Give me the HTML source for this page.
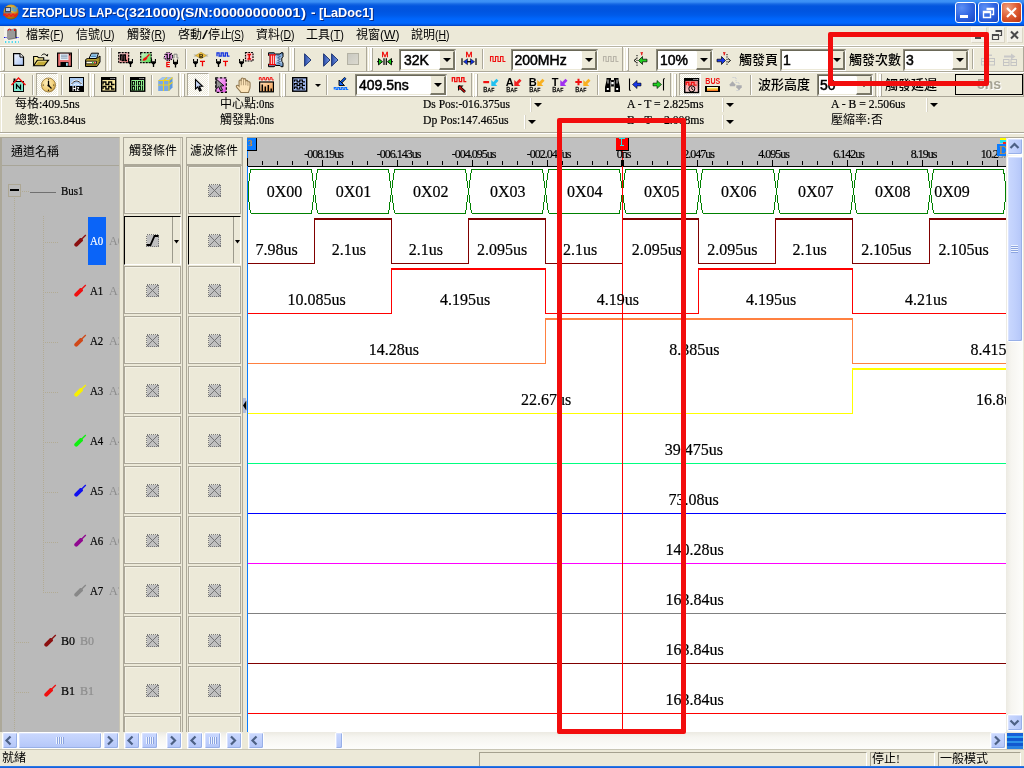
<!DOCTYPE html>
<html><head><meta charset="utf-8"><title>ZEROPLUS LAP-C</title><style>
html,body{margin:0;padding:0;background:#ECE9D8;}
body{width:1024px;height:768px;overflow:hidden;position:relative;font-family:"Liberation Sans",sans-serif;}
.b{position:absolute;display:block;box-sizing:border-box}
.t{position:absolute;white-space:nowrap;}
#w{position:absolute;left:0;top:0;width:1024px;height:768px;will-change:transform;overflow:hidden}
.c{display:inline-block;vertical-align:top;overflow:visible}
.cj{font-family:"Liberation Sans","Noto Sans CJK TC",sans-serif;color:#000}
.cjm{font-family:"Liberation Sans","Noto Sans CJK TC",sans-serif;color:#000;font-weight:500}
u{text-decoration:underline;text-underline-offset:1px}
</style></head><body>
<div id="w">
<!-- titlebar -->
<div class="b" style="left:0px;top:0px;width:1024px;height:26px;background:linear-gradient(to bottom,#3F93F6 0px,#3A8EF4 2px,#1668E4 4px,#0356DE 6px,#0054E0 11px,#005AE8 15px,#0066FC 19px,#0068FF 23px,#0058E4 24.500px,#003EC0 26px);"></div><svg class="b" style="left:3px;top:4px" width="16" height="16" viewBox="0 0 16 16">
<defs><radialGradient id="gl" cx="0.45" cy="0.35" r="0.7"><stop offset="0" stop-color="#F6D860"/><stop offset="0.6" stop-color="#C89018"/><stop offset="1" stop-color="#6A4808"/></radialGradient></defs>
<circle cx="8" cy="8" r="7.6" fill="url(#gl)"/>
<rect x="2" y="3" width="6" height="5" fill="#404858"/><rect x="3" y="4" width="4" height="3" fill="#B8C8F0"/>
<rect x="1.5" y="8" width="7" height="1.6" fill="#707888"/>
<path d="M9 7V4h2v3h2V4h2" stroke="#40A0F0" stroke-width="1.2" fill="none"/>
<path d="M1 12V10.2h2V12h2V10.2h2V12h2V10.2h2V12h2V10.2h2" stroke="#F01818" stroke-width="1.3" fill="none"/>
</svg><div class="t" style="left:22px;top:5px;font:bold 13px/15px 'Liberation Sans';color:#fff;text-shadow:1px 1px 0 #0A2A80"><span style="display:inline-block;transform-origin:0 0;transform:scaleX(0.8992);">ZEROPLUS LAP-C(</span></div><div class="t" style="left:128.5px;top:5px;font:bold 13px/15px 'Liberation Sans';color:#fff;text-shadow:1px 1px 0 #0A2A80"><span style="display:inline-block;transform-origin:0 0;transform:scaleX(1.0950);">321000</span></div><div class="t" style="left:176px;top:5px;font:bold 13px/15px 'Liberation Sans';color:#fff;text-shadow:1px 1px 0 #0A2A80"><span style="display:inline-block;transform-origin:0 0;transform:scaleX(1.0395);">)(</span></div><div class="t" style="left:185px;top:5px;font:bold 13px/15px 'Liberation Sans';color:#fff;text-shadow:1px 1px 0 #0A2A80"><span style="display:inline-block;transform-origin:0 0;transform:scaleX(1.0769);">S/N:</span></div><div class="t" style="left:213px;top:5px;font:bold 13px/15px 'Liberation Sans';color:#fff;text-shadow:1px 1px 0 #0A2A80"><span style="display:inline-block;transform-origin:0 0;transform:scaleX(1.1002);">00000000001</span></div><div class="t" style="left:300.5px;top:5px;font:bold 13px/15px 'Liberation Sans';color:#fff;text-shadow:1px 1px 0 #0A2A80"><span style="display:inline-block;transform-origin:0 0;transform:scaleX(1.1550);">)</span></div><div class="t" style="left:310.5px;top:5px;font:bold 13px/15px 'Liberation Sans';color:#fff;text-shadow:1px 1px 0 #0A2A80"><span style="display:inline-block;transform-origin:0 0;transform:scaleX(1.0395);">-</span></div><div class="t" style="left:318.5px;top:5px;font:bold 13px/15px 'Liberation Sans';color:#fff;text-shadow:1px 1px 0 #0A2A80"><span style="display:inline-block;transform-origin:0 0;transform:scaleX(0.9799);">[LaDoc1]</span></div><div class="b" style="left:955px;top:2px;width:21px;height:21px;border:1px solid #fff;border-radius:3px;background:radial-gradient(circle at 30% 25%,#5C8FF5 0%,#2C62E0 55%,#1A46C0 100%);box-sizing:border-box"><div class="b" style="left:4px;top:12px;width:8px;height:3px;background:#fff"></div></div><div class="b" style="left:978px;top:2px;width:21px;height:21px;border:1px solid #fff;border-radius:3px;background:radial-gradient(circle at 30% 25%,#5C8FF5 0%,#2C62E0 55%,#1A46C0 100%);box-sizing:border-box"><svg class="b" style="left:1px;top:1px" width="17" height="17"><path d="M6.5 4.5h7v6h-2M6.5 5.5h7" stroke="#fff" stroke-width="1.4" fill="none"/><path d="M3.5 7.5h7v6h-7zM3.5 8.5h7" stroke="#fff" stroke-width="1.4" fill="none"/></svg></div><div class="b" style="left:1001px;top:2px;width:21px;height:21px;border:1px solid #fff;border-radius:3px;background:radial-gradient(circle at 30% 25%,#F0A080 0%,#DE5A30 50%,#B83010 100%);box-sizing:border-box"><svg class="b" style="left:1px;top:1px" width="17" height="17"><path d="M4 4l9 9M13 4l-9 9" stroke="#fff" stroke-width="2.2"/></svg></div>
<!-- menubar -->
<div class="b" style="left:0px;top:26px;width:1024px;height:21px;background:#ECE9D8"></div><svg class="b" style="left:3px;top:27px" width="18" height="17" viewBox="0 0 18 17">
<rect x="1" y="0" width="16" height="16" fill="#F4F2EA"/>
<path d="M4 3l8-1.5 1.500 1v9l-8 1.500L4 11z" fill="#808080"/><path d="M4 3l8-1.500v9L4 12z" fill="#9A9A9A"/>
<path d="M12 1.500l1.500 1v9L12 10.500z" fill="#505050"/>
<path d="M5 3.500c1-2 2-2 3 0" stroke="#E01010" stroke-width="1.200" fill="none"/><rect x="11" y="2" width="1.500" height="2" fill="#E01010"/>
<path d="M1 10.500h3M13 10.500h3" stroke="#1010E0" stroke-width="1.200" stroke-dasharray="1.500 1"/>
<path d="M2 15h14" stroke="#10D0F0" stroke-width="1.300" stroke-dasharray="1.300 2"/>
</svg><div class="t" style="left:26px;top:29px;font:12px/12px 'Liberation Sans';color:#000;"><span class="c cj" style="width:24px">檔案</span></div><div class="t" style="left:50px;top:29px;font:12px/12px 'Liberation Sans';color:#000;"><span style="display:inline-block;transform-origin:0 0;transform:scaleX(0.8811);">(<u>F</u>)</span></div><div class="t" style="left:76px;top:29px;font:12px/12px 'Liberation Sans';color:#000;"><span class="c cj" style="width:24px">信號</span></div><div class="t" style="left:100px;top:29px;font:12px/12px 'Liberation Sans';color:#000;"><span style="display:inline-block;transform-origin:0 0;transform:scaleX(0.8704);">(<u>U</u>)</span></div><div class="t" style="left:127px;top:29px;font:12px/12px 'Liberation Sans';color:#000;"><span class="c cj" style="width:24px">觸發</span></div><div class="t" style="left:151px;top:29px;font:12px/12px 'Liberation Sans';color:#000;"><span style="display:inline-block;transform-origin:0 0;transform:scaleX(0.8704);">(<u>R</u>)</span></div><div class="t" style="left:256px;top:29px;font:12px/12px 'Liberation Sans';color:#000;"><span class="c cj" style="width:24px">資料</span></div><div class="t" style="left:280px;top:29px;font:12px/12px 'Liberation Sans';color:#000;"><span style="display:inline-block;transform-origin:0 0;transform:scaleX(0.8704);">(<u>D</u>)</span></div><div class="t" style="left:306px;top:29px;font:12px/12px 'Liberation Sans';color:#000;"><span class="c cj" style="width:24px">工具</span></div><div class="t" style="left:330px;top:29px;font:12px/12px 'Liberation Sans';color:#000;"><span style="display:inline-block;transform-origin:0 0;transform:scaleX(0.9137);">(<u>T</u>)</span></div><div class="t" style="left:356px;top:29px;font:12px/12px 'Liberation Sans';color:#000;"><span class="c cj" style="width:24px">視窗</span></div><div class="t" style="left:380px;top:29px;font:12px/12px 'Liberation Sans';color:#000;"><span style="display:inline-block;transform-origin:0 0;transform:scaleX(1.0094);">(<u>W</u>)</span></div><div class="t" style="left:411px;top:29px;font:12px/12px 'Liberation Sans';color:#000;"><span class="c cj" style="width:24px">說明</span></div><div class="t" style="left:435px;top:29px;font:12px/12px 'Liberation Sans';color:#000;"><span style="display:inline-block;transform-origin:0 0;transform:scaleX(0.8704);">(<u>H</u>)</span></div><div class="t" style="left:178px;top:29px;font:12px/12px 'Liberation Sans';color:#000;"><span class="c cj" style="width:24px">啓動</span></div><div class="t" style="left:202px;top:29px;font:12px/12px 'Liberation Sans';color:#000;"><span style="display:inline-block;transform-origin:0 0;transform:scaleX(1.7996);">/</span></div><div class="t" style="left:208px;top:29px;font:12px/12px 'Liberation Sans';color:#000;"><span class="c cj" style="width:24px">停止</span></div><div class="t" style="left:231px;top:29px;font:12px/12px 'Liberation Sans';color:#000;"><span style="display:inline-block;transform-origin:0 0;transform:scaleX(0.8127);">(<u>S</u>)</span></div><div class="b" style="left:971px;top:27px;width:16px;height:16px;background:#F3F1E8;border:1px solid #F8F7F2;border-right-color:#DAD6C6;border-bottom-color:#DAD6C6;box-sizing:border-box"><div class="b" style="left:3px;top:9px;width:6px;height:2px;background:#4A4A4A"></div></div><div class="b" style="left:989px;top:27px;width:16px;height:16px;background:#F3F1E8;border:1px solid #F8F7F2;border-right-color:#DAD6C6;border-bottom-color:#DAD6C6;box-sizing:border-box"><svg class="b" style="left:0;top:0" width="14" height="14"><path d="M5.5 2.5h6v5h-2M5.5 3.5h6" stroke="#4A4A4A" stroke-width="1.2" fill="none"/><path d="M2.5 6.5h6v5h-6zM2.5 7.5h6" stroke="#4A4A4A" stroke-width="1.2" fill="none"/></svg></div><div class="b" style="left:1007px;top:27px;width:16px;height:16px;background:#F3F1E8;border:1px solid #F8F7F2;border-right-color:#DAD6C6;border-bottom-color:#DAD6C6;box-sizing:border-box"><svg class="b" style="left:0;top:0" width="14" height="14"><path d="M3 3.5l7 7M10 3.5l-7 7" stroke="#4A4A4A" stroke-width="2"/></svg></div><div class="b" style="left:0px;top:45px;width:1024px;height:1px;background:#fff"></div><div class="b" style="left:0px;top:46px;width:1024px;height:1px;background:#B8B5A4"></div><div class="b" style="left:0px;top:47px;width:1024px;height:1px;background:#fff"></div>
<!-- toolbars -->
<div class="b" style="left:0px;top:71px;width:1024px;height:1px;background:#ACA899"></div><div class="b" style="left:0px;top:72px;width:1024px;height:1px;background:#FFFFFF"></div><div class="b" style="left:0px;top:96px;width:1024px;height:1px;background:#ACA899"></div><div class="b" style="left:0px;top:47px;width:1px;height:24px;background:#FFFFFF"></div><div class="b" style="left:105px;top:47px;width:1px;height:24px;background:#ACA899"></div><div class="b" style="left:2px;top:48px;width:3px;height:23px;border-left:2px solid #FFFFFF;border-right:1px solid #ACA899;border-bottom:1px solid #ACA899"></div><div class="b" style="left:107px;top:47px;width:1px;height:24px;background:#FFFFFF"></div><div class="b" style="left:288px;top:47px;width:1px;height:24px;background:#ACA899"></div><div class="b" style="left:109px;top:48px;width:3px;height:23px;border-left:2px solid #FFFFFF;border-right:1px solid #ACA899;border-bottom:1px solid #ACA899"></div><div class="b" style="left:290px;top:47px;width:1px;height:24px;background:#FFFFFF"></div><div class="b" style="left:366px;top:47px;width:1px;height:24px;background:#ACA899"></div><div class="b" style="left:292px;top:48px;width:3px;height:23px;border-left:2px solid #FFFFFF;border-right:1px solid #ACA899;border-bottom:1px solid #ACA899"></div><div class="b" style="left:368px;top:47px;width:1px;height:24px;background:#FFFFFF"></div><div class="b" style="left:622px;top:47px;width:1px;height:24px;background:#ACA899"></div><div class="b" style="left:370px;top:48px;width:3px;height:23px;border-left:2px solid #FFFFFF;border-right:1px solid #ACA899;border-bottom:1px solid #ACA899"></div><div class="b" style="left:624px;top:47px;width:1px;height:24px;background:#FFFFFF"></div><div class="b" style="left:1023px;top:47px;width:1px;height:24px;background:#ACA899"></div><div class="b" style="left:626px;top:48px;width:3px;height:23px;border-left:2px solid #FFFFFF;border-right:1px solid #ACA899;border-bottom:1px solid #ACA899"></div><div class="b" style="left:0px;top:73px;width:1px;height:24px;background:#FFFFFF"></div><div class="b" style="left:88px;top:73px;width:1px;height:24px;background:#ACA899"></div><div class="b" style="left:2px;top:74px;width:3px;height:23px;border-left:2px solid #FFFFFF;border-right:1px solid #ACA899;border-bottom:1px solid #ACA899"></div><div class="b" style="left:90px;top:73px;width:1px;height:24px;background:#FFFFFF"></div><div class="b" style="left:178px;top:73px;width:1px;height:24px;background:#ACA899"></div><div class="b" style="left:92px;top:74px;width:3px;height:23px;border-left:2px solid #FFFFFF;border-right:1px solid #ACA899;border-bottom:1px solid #ACA899"></div><div class="b" style="left:180px;top:73px;width:1px;height:24px;background:#FFFFFF"></div><div class="b" style="left:279px;top:73px;width:1px;height:24px;background:#ACA899"></div><div class="b" style="left:182px;top:74px;width:3px;height:23px;border-left:2px solid #FFFFFF;border-right:1px solid #ACA899;border-bottom:1px solid #ACA899"></div><div class="b" style="left:281px;top:73px;width:1px;height:24px;background:#FFFFFF"></div><div class="b" style="left:471px;top:73px;width:1px;height:24px;background:#ACA899"></div><div class="b" style="left:283px;top:74px;width:3px;height:23px;border-left:2px solid #FFFFFF;border-right:1px solid #ACA899;border-bottom:1px solid #ACA899"></div><div class="b" style="left:473px;top:73px;width:1px;height:24px;background:#FFFFFF"></div><div class="b" style="left:670px;top:73px;width:1px;height:24px;background:#ACA899"></div><div class="b" style="left:475px;top:74px;width:3px;height:23px;border-left:2px solid #FFFFFF;border-right:1px solid #ACA899;border-bottom:1px solid #ACA899"></div><div class="b" style="left:672px;top:73px;width:1px;height:24px;background:#FFFFFF"></div><div class="b" style="left:875px;top:73px;width:1px;height:24px;background:#ACA899"></div><div class="b" style="left:674px;top:74px;width:3px;height:23px;border-left:2px solid #FFFFFF;border-right:1px solid #ACA899;border-bottom:1px solid #ACA899"></div><div class="b" style="left:877px;top:73px;width:1px;height:24px;background:#FFFFFF"></div><div class="b" style="left:1023px;top:73px;width:1px;height:24px;background:#ACA899"></div><div class="b" style="left:879px;top:74px;width:3px;height:23px;border-left:2px solid #FFFFFF;border-right:1px solid #ACA899;border-bottom:1px solid #ACA899"></div><svg class="b" style="left:13px;top:53px;overflow:visible" width="16" height="16" viewBox="0 0 16 16"><defs><linearGradient id="ng" x1="0" y1="0" x2="1" y2="1"><stop offset="0" stop-color="#F4F7FE"/><stop offset="1" stop-color="#A8C4F4"/></linearGradient></defs><path d="M.6 .6h6.400l3.500 3.500v8.300h-9.900z" fill="url(#ng)" stroke="#000" stroke-width="1.200"/><path d="M7 .6v3.500h3.500" fill="#fff" stroke="#000" stroke-width="1"/></svg><svg class="b" style="left:33px;top:53px;overflow:visible" width="16" height="16" viewBox="0 0 16 16"><path d="M8.500 2.500c1.500-2 3.800-2 5 0" stroke="#000" fill="none" stroke-width="1"/><path d="M12.500 2.600l2.300.8.400-2.600z" fill="#000"/><path d="M.6 12.500V3.500h3.800l1.300 1.300h5v2.500" fill="#FAEC98" stroke="#000" stroke-width="1.100"/><path d="M.6 12.700l3.700-5.400h11.200l-4.200 5.400z" fill="#C4AC38" stroke="#000" stroke-width="1.100"/><path d="M2.800 11.500l2.400-3.200h8" stroke="#E8D880" fill="none"/></svg><svg class="b" style="left:57px;top:53px;overflow:visible" width="16" height="16" viewBox="0 0 16 16"><rect x=".6" y=".1" width="13.800" height="13.300" fill="#E87070" stroke="#000" stroke-width="1.200"/><rect x="3" y=".7" width="8.500" height="6.300" fill="#E6EEF6"/><path d="M4 2.200h6.500M4 3.700h6.500M4 5.200h6.500" stroke="#8FA4BC"/><rect x="3.500" y="9" width="8" height="4.400" fill="#000"/><rect x="9" y="9.800" width="1.800" height="3" fill="#9FE0F0"/><rect x="12" y="1" width="1.400" height="1.400" fill="#000"/></svg><svg class="b" style="left:85px;top:53px;overflow:visible" width="16" height="16" viewBox="0 0 16 16"><path d="M4 5.500l2.500-5.300h7L11.500 5.500z" fill="#BFE3F7" stroke="#000"/><path d="M6.500 2h5M6 3.500h5" stroke="#5090C0"/><path d="M.5 8c0-2 1-2.500 3-2.500h8l3.500-2.500v6l-3 4.500h-11.500z" fill="#B8A030" stroke="#000"/><path d="M1 8.200h10.500v2.600h-10.500z" fill="#FFFBE0" stroke="#000" stroke-width=".8"/><path d="M1 12h10.500" stroke="#6A5A10" /><rect x="7" y="9" width="1.500" height="1.200" fill="#20C020"/><rect x="9" y="9" width="1.500" height="1.200" fill="#F02020"/><path d="M12.500 6.500l2-1.500M12.500 8.500l2-1.500M12.500 10.500l2-2" stroke="#7A6A18" stroke-width=".8"/></svg><svg class="b" style="left:304px;top:53px;overflow:visible" width="16" height="16" viewBox="0 0 16 16"><defs><linearGradient id="pg" x1="0" x2="1"><stop offset="0" stop-color="#2A4CA8"/><stop offset="1" stop-color="#7C9EE8"/></linearGradient></defs><path d="M.6 .8L7 7 .6 13.200z" fill="url(#pg)" stroke="#102868" stroke-width=".9"/></svg><svg class="b" style="left:323px;top:53px;overflow:visible" width="16" height="16" viewBox="0 0 16 16"><path d="M.6 .8L7 7 .6 13.200z" fill="url(#pg)" stroke="#102868" stroke-width=".9"/><path d="M8.600 .8L15 7 8.600 13.200z" fill="url(#pg)" stroke="#102868" stroke-width=".9"/></svg><svg class="b" style="left:347px;top:53px;overflow:visible" width="16" height="16" viewBox="0 0 16 16"><defs><linearGradient id="sg" x1="0" y1="0" x2="1" y2="1"><stop offset="0" stop-color="#C8C8C0"/><stop offset="1" stop-color="#DCDAD0"/></linearGradient></defs><rect x=".5" y=".5" width="11" height="11" fill="url(#sg)" stroke="#B4B2A4"/></svg><svg class="b" style="left:118px;top:52px;overflow:visible" width="16" height="16" viewBox="0 0 16 16"><defs><linearGradient id="t1g" x1="0" y1="0" x2="1" y2="1"><stop offset="0" stop-color="#FCE4E4"/><stop offset="1" stop-color="#F07878"/></linearGradient></defs><rect x=".7" y=".7" width="10" height="10" fill="url(#t1g)" stroke="#000" stroke-width="1.200" stroke-dasharray="2 1"/><path d="M2.5 8.500V3H4.125V8.500H5.750V3H7.375V8.500H9" stroke="#000" stroke-width="1.300" fill="none"/><path d="M10.550 7v2.500M14.450 7v2.500" stroke="#000" stroke-width="1.100"/><path d="M10 9.200h5v1.600l-1.500 1.500h-2l-1.500-1.500z" fill="#000"/><path d="M12.500 11.800v3.200" stroke="#000" stroke-width="1.300"/></svg><svg class="b" style="left:140px;top:52px;overflow:visible" width="16" height="16" viewBox="0 0 16 16"><defs><linearGradient id="t2g" x1="0" y1="0" x2="1" y2="1"><stop offset="0" stop-color="#D8F8D0"/><stop offset="1" stop-color="#48D848"/></linearGradient></defs><rect x=".7" y=".7" width="10.500" height="10" fill="url(#t2g)" stroke="#000" stroke-width="1.200" stroke-dasharray="2 1"/><path d="M2.500 8.500c.3-1.800 1.800-3 3.800-3.800L7.500 6c-.8 2-2.500 3.200-5 2.500z" fill="#F01010"/><path d="M6.500 5.500L9.500 2.300" stroke="#F01010" stroke-width="1.300"/><path d="M11.550 7v2.500M15.450 7v2.500" stroke="#000" stroke-width="1.100"/><path d="M11 9.200h5v1.600l-1.500 1.500h-2l-1.500-1.500z" fill="#000"/><path d="M13.500 11.800v3.200" stroke="#000" stroke-width="1.300"/></svg><svg class="b" style="left:163px;top:52px;overflow:visible" width="16" height="16" viewBox="0 0 16 16"><path d="M0 6h2M9 6h2V2.200h3V6h1.500" stroke="#808080" stroke-width="1" fill="none"/><circle cx="5.500" cy="4.500" r="4" fill="#F0A0F0" stroke="#000" stroke-width="1.100" stroke-dasharray="1.300 1"/><path d="M3 2.500h1.200v4.300h2.600V2.500h1.200" stroke="#000" stroke-width="1.200" fill="none"/><path d="M3.300 10.300h3.700M3.300 12.500h3.200M3.300 14.700h3.700M3.800 10.300v4.400" stroke="#F00000" stroke-width="1.200" fill="none"/><path d="M10.550 7.500v2.500M14.450 7.500v2.500" stroke="#000" stroke-width="1.100"/><path d="M10 9.700h5v1.600l-1.500 1.500h-2l-1.500-1.500z" fill="#000"/><path d="M12.500 12.300v3.200" stroke="#000" stroke-width="1.300"/></svg><svg class="b" style="left:193px;top:52px;overflow:visible" width="16" height="16" viewBox="0 0 16 16"><path d="M1 5l2-3M1 2l2 3M13 5l2-3M13 2l2 3" stroke="#B8B8B0" stroke-width=".7"/><path d="M2.500 3.500L8 .3l5.500 3.200L8 6.700z" fill="#F0C040" stroke="#A08020" stroke-width=".5"/><text x="6" y="5.800" font-size="6" font-weight="bold" font-family="Liberation Sans" fill="#000">B</text><path d="M7 9.300h5M9.500 9.300v5" stroke="#F00000" stroke-width="1.300"/><path d="M0.550 7v2.500M4.450 7v2.500" stroke="#000" stroke-width="1.100"/><path d="M0 9.200h5v1.600l-1.500 1.500h-2l-1.500-1.500z" fill="#000"/><path d="M2.500 11.800v3.200" stroke="#000" stroke-width="1.300"/></svg><svg class="b" style="left:215px;top:52px;overflow:visible" width="16" height="16" viewBox="0 0 16 16"><path d="M2 4.200V0.800H4.08333V4.200H6.16667V0.800H8.250V4.200H10.3333V0.800H12.4167V4.200H14.500" stroke="#1030E0" stroke-width="1.300" fill="none"/><path d="M8 9.300h5M10.500 9.300v5" stroke="#F00000" stroke-width="1.300"/><path d="M1.550 7v2.500M5.450 7v2.500" stroke="#000" stroke-width="1.100"/><path d="M1 9.200h5v1.600l-1.500 1.500h-2l-1.500-1.500z" fill="#000"/><path d="M3.500 11.800v3.200" stroke="#000" stroke-width="1.300"/></svg><svg class="b" style="left:238px;top:52px;overflow:visible" width="16" height="16" viewBox="0 0 16 16"><rect x="7.500" y=".5" width="7.500" height="8.500" fill="#FAC8C8" stroke="#000" stroke-width="1.200" stroke-dasharray="1.800 1"/><path d="M9.500 2.500h3.500M9.500 7h3.500M11.250 2.500v4.500" stroke="#E00000" stroke-width="1.500"/><path d="M1.550 7v2.500M5.450 7v2.500" stroke="#000" stroke-width="1.100"/><path d="M1 9.200h5v1.600l-1.500 1.500h-2l-1.500-1.500z" fill="#000"/><path d="M3.500 11.800v3.200" stroke="#000" stroke-width="1.300"/></svg><svg class="b" style="left:268px;top:52px;overflow:visible" width="16" height="16" viewBox="0 0 16 16"><defs><linearGradient id="dvg" x1="0" y1="0" x2="0" y2="1"><stop offset="0" stop-color="#5888C0"/><stop offset=".5" stop-color="#D0E4F8"/><stop offset="1" stop-color="#5888C0"/></linearGradient></defs><path d="M.5 .8h5.500l1.500 1.200h4.500l1-1.200h2v4l-1.200 1.200v3.500l1.200 1.200v4h-2l-1-1.200H7.500L6 14.700H.5V12h1V3.500h-1z" fill="url(#dvg)" stroke="#000" stroke-width="1"/><rect x="1.500" y="3" width="6" height="9.500" fill="#fff"/><path d="M2.300 3v9.500M4.300 3v9.500M6.300 3v9.500" stroke="#F00000" stroke-width="1.100"/><path d="M.8 2.800h7.200M.8 12.700h7.200" stroke="#F00000" stroke-width="1.300"/><path d="M9.500 3.500l3 1.200-3 1.200 3 1.200-3 1.200 3 1.200-3 1.200 3 1.200" stroke="#284878" stroke-width=".7" fill="none"/></svg><svg class="b" style="left:377px;top:52px;overflow:visible" width="16" height="16" viewBox="0 0 16 16"><g transform="translate(4.500 0) scale(1.200 .9)"><text x="0" y="5.500" font-size="7" font-family="Liberation Sans" fill="#F00000" stroke="#F00000" stroke-width=".3">M</text></g><path d="M1.500 6.500l4 3.200-4 3.200z" fill="#10D010" stroke="#000" stroke-width=".9"/><path d="M14.500 6.500l-4 3.200 4 3.200z" fill="#10D010" stroke="#000" stroke-width=".9"/><path d="M0 9.700h2M14 9.700h2" stroke="#000"/><path d="M7 6.300v6.800M9.300 6.300v6.800" stroke="#000" stroke-width="1.200"/></svg><svg class="b" style="left:461px;top:52px;overflow:visible" width="16" height="16" viewBox="0 0 16 16"><g transform="translate(4.500 0) scale(1.200 .9)"><text x="0" y="5.500" font-size="7" font-family="Liberation Sans" fill="#F00000" stroke="#F00000" stroke-width=".3">M</text></g><path d="M1 6.300v6.800M15 6.300v6.800" stroke="#000" stroke-width="1.200"/><path d="M2.500 9.700l4-3v6z" fill="#1030E0" stroke="#000" stroke-width=".5"/><path d="M13.500 9.700l-4-3v6z" fill="#1030E0" stroke="#000" stroke-width=".5"/><path d="M6 9.700h4" stroke="#000" stroke-width="1.300"/></svg><svg class="b" style="left:490px;top:52px;overflow:visible" width="16" height="16" viewBox="0 0 16 16"><path d="M0.500 9.500V4.500H3V9.500H5.500V4.500H8V9.500H10.500V4.500H13V9.500H15.500" stroke="#F01010" stroke-width="1.100" fill="none"/></svg><svg class="b" style="left:603px;top:52px;overflow:visible" width="16" height="16" viewBox="0 0 16 16"><path d="M0.500 9.500V4.500H3V9.500H5.500V4.500H8V9.500H10.500V4.500H13V9.500H15.500" stroke="#B8B4A8" stroke-width="1.100" fill="none"/></svg><svg class="b" style="left:633px;top:52px;overflow:visible" width="16" height="16" viewBox="0 0 16 16"><path d="M7.500 .8h2.500M8.750 .8v2.500" stroke="#E00000" stroke-width="1.100"/><path d="M4 3v11" stroke="#000" stroke-dasharray="1.200 1.200"/><path d="M1 8.500l2.500-2M1 8.500l2.500 2" stroke="#000" fill="none"/><path d="M5.500 8.500l4-4v2.700h4.500v2.600H9.500v2.700z" fill="#20D020" stroke="#000" stroke-width=".7"/></svg><svg class="b" style="left:716px;top:52px;overflow:visible" width="16" height="16" viewBox="0 0 16 16"><path d="M7 .8h2.500M8.250 .8v2.500" stroke="#E00000" stroke-width="1.100"/><path d="M11 2v12" stroke="#000" stroke-dasharray="1.200 1.200"/><path d="M14.500 8.500l-2.500-2M14.500 8.500l-2.500 2" stroke="#000" fill="none"/><path d="M9.500 8.500l-4-4v2.700H1v2.600h4.500v2.700z" fill="#1838E8" stroke="#000" stroke-width=".7"/></svg><svg class="b" style="left:980px;top:52px;overflow:visible" width="16" height="16" viewBox="0 0 16 16"><path d="M7 2.500h5v1.500H7z" fill="#C8C8C8"/><g fill="none" stroke="#C4C4C4"><rect x="1.500" y="6.500" width="5.500" height="6.500"/><rect x="9" y="6.500" width="5.500" height="6.500"/><path d="M1.500 9.500h5.500M9 9.500h5.500"/></g></svg><svg class="b" style="left:1002px;top:52px;overflow:visible" width="16" height="16" viewBox="0 0 16 16"><path d="M2 3.500h7V1.500l4.500 3-4.500 3V5.500H2z" fill="#C8C8C8"/><g fill="none" stroke="#C4C4C4"><rect x="1.500" y="7.500" width="5.500" height="6"/><rect x="9" y="7.500" width="5.500" height="6"/><path d="M1.500 10.500h5.500M9 10.500h5.500"/></g></svg><div class="b" style="left:78px;top:49px;width:1px;height:20px;background:#ACA899"></div><div class="b" style="left:79px;top:49px;width:1px;height:20px;background:#FFFFFF"></div><div class="b" style="left:185px;top:49px;width:1px;height:20px;background:#ACA899"></div><div class="b" style="left:186px;top:49px;width:1px;height:20px;background:#FFFFFF"></div><div class="b" style="left:261px;top:49px;width:1px;height:20px;background:#ACA899"></div><div class="b" style="left:262px;top:49px;width:1px;height:20px;background:#FFFFFF"></div><div class="b" style="left:482px;top:49px;width:1px;height:20px;background:#ACA899"></div><div class="b" style="left:483px;top:49px;width:1px;height:20px;background:#FFFFFF"></div><div class="b" style="left:972px;top:49px;width:1px;height:20px;background:#ACA899"></div><div class="b" style="left:973px;top:49px;width:1px;height:20px;background:#FFFFFF"></div><div class="b" style="left:399px;top:49px;width:57px;height:22px;background:#fff;border-top:2px solid #8C8A7C;border-left:2px solid #8C8A7C;border-bottom:1px solid #fff;border-right:1px solid #fff;"></div><div class="b" style="left:400px;top:50px;width:55px;height:20px;border-top:1px solid #6A6858;border-left:1px solid #6A6858;border-right:1px solid #ECE9D8;border-bottom:1px solid #ECE9D8"></div><div class="b" style="left:439px;top:51px;width:16px;height:19px;background:#ECE9D8;border-top:1px solid #ECE9D8;border-left:1px solid #fff;border-right:2px solid #7A7868;border-bottom:2px solid #7A7868"></div><svg class="b" style="left:442.5px;top:58px" width="8" height="4"><path d="M0 0h8L4 4z" fill="#000"/></svg><div class="t" style="left:404px;top:53px;font:14px/14px 'Liberation Sans';color:#000;-webkit-text-stroke:0.5px #000">32K</div><div class="b" style="left:511px;top:49px;width:87px;height:22px;background:#fff;border-top:2px solid #8C8A7C;border-left:2px solid #8C8A7C;border-bottom:1px solid #fff;border-right:1px solid #fff;"></div><div class="b" style="left:512px;top:50px;width:85px;height:20px;border-top:1px solid #6A6858;border-left:1px solid #6A6858;border-right:1px solid #ECE9D8;border-bottom:1px solid #ECE9D8"></div><div class="b" style="left:581px;top:51px;width:16px;height:19px;background:#ECE9D8;border-top:1px solid #ECE9D8;border-left:1px solid #fff;border-right:2px solid #7A7868;border-bottom:2px solid #7A7868"></div><svg class="b" style="left:584.5px;top:58px" width="8" height="4"><path d="M0 0h8L4 4z" fill="#000"/></svg><div class="t" style="left:514.5px;top:53px;font:14px/14px 'Liberation Sans';color:#000;-webkit-text-stroke:0.5px #000">200MHz</div><div class="b" style="left:656px;top:49px;width:57px;height:22px;background:#fff;border-top:2px solid #8C8A7C;border-left:2px solid #8C8A7C;border-bottom:1px solid #fff;border-right:1px solid #fff;"></div><div class="b" style="left:657px;top:50px;width:55px;height:20px;border-top:1px solid #6A6858;border-left:1px solid #6A6858;border-right:1px solid #ECE9D8;border-bottom:1px solid #ECE9D8"></div><div class="b" style="left:696px;top:51px;width:16px;height:19px;background:#ECE9D8;border-top:1px solid #ECE9D8;border-left:1px solid #fff;border-right:2px solid #7A7868;border-bottom:2px solid #7A7868"></div><svg class="b" style="left:699.5px;top:58px" width="8" height="4"><path d="M0 0h8L4 4z" fill="#000"/></svg><div class="t" style="left:660px;top:53px;font:14px/14px 'Liberation Sans';color:#000;-webkit-text-stroke:0.5px #000">10%</div><div class="b" style="left:780px;top:49px;width:66px;height:22px;background:#fff;border-top:2px solid #8C8A7C;border-left:2px solid #8C8A7C;border-bottom:1px solid #fff;border-right:1px solid #fff;"></div><div class="b" style="left:781px;top:50px;width:64px;height:20px;border-top:1px solid #6A6858;border-left:1px solid #6A6858;border-right:1px solid #ECE9D8;border-bottom:1px solid #ECE9D8"></div><div class="b" style="left:829px;top:51px;width:16px;height:19px;background:#ECE9D8;border-top:1px solid #ECE9D8;border-left:1px solid #fff;border-right:2px solid #7A7868;border-bottom:2px solid #7A7868"></div><svg class="b" style="left:832.5px;top:58px" width="8" height="4"><path d="M0 0h8L4 4z" fill="#000"/></svg><div class="t" style="left:783px;top:53px;font:14px/14px 'Liberation Sans';color:#000;-webkit-text-stroke:0.5px #000">1</div><div class="b" style="left:903px;top:49px;width:66px;height:22px;background:#fff;border-top:2px solid #8C8A7C;border-left:2px solid #8C8A7C;border-bottom:1px solid #fff;border-right:1px solid #fff;"></div><div class="b" style="left:904px;top:50px;width:64px;height:20px;border-top:1px solid #6A6858;border-left:1px solid #6A6858;border-right:1px solid #ECE9D8;border-bottom:1px solid #ECE9D8"></div><div class="b" style="left:952px;top:51px;width:16px;height:19px;background:#ECE9D8;border-top:1px solid #ECE9D8;border-left:1px solid #fff;border-right:2px solid #7A7868;border-bottom:2px solid #7A7868"></div><svg class="b" style="left:955.5px;top:58px" width="8" height="4"><path d="M0 0h8L4 4z" fill="#000"/></svg><div class="t" style="left:906px;top:53px;font:14px/14px 'Liberation Sans';color:#000;-webkit-text-stroke:0.5px #000">3</div><div class="t" style="left:739px;top:53px;font:13px/13px 'Liberation Sans';color:#000;"><span class="c cjm" style="width:39px">觸發頁</span></div><div class="t" style="left:849px;top:53px;font:13px/13px 'Liberation Sans';color:#000;"><span class="c cjm" style="width:52px">觸發次數</span></div><div class="b" style="left:36px;top:73px;width:22px;height:23px;background-image:linear-gradient(45deg,#fff 25%,transparent 25%,transparent 75%,#fff 75%),linear-gradient(45deg,#fff 25%,transparent 25%,transparent 75%,#fff 75%);background-size:2px 2px;background-position:0 0,1px 1px;background-color:#ECE9D8;border-top:1px solid #ACA899;border-left:1px solid #ACA899;border-right:1px solid #fff;border-bottom:1px solid #fff"></div><div class="b" style="left:187px;top:73px;width:22px;height:23px;background-image:linear-gradient(45deg,#fff 25%,transparent 25%,transparent 75%,#fff 75%),linear-gradient(45deg,#fff 25%,transparent 25%,transparent 75%,#fff 75%);background-size:2px 2px;background-position:0 0,1px 1px;background-color:#ECE9D8;border-top:1px solid #ACA899;border-left:1px solid #ACA899;border-right:1px solid #fff;border-bottom:1px solid #fff"></div><div class="b" style="left:679px;top:73px;width:22px;height:23px;background-image:linear-gradient(45deg,#fff 25%,transparent 25%,transparent 75%,#fff 75%),linear-gradient(45deg,#fff 25%,transparent 25%,transparent 75%,#fff 75%);background-size:2px 2px;background-position:0 0,1px 1px;background-color:#ECE9D8;border-top:1px solid #ACA899;border-left:1px solid #ACA899;border-right:1px solid #fff;border-bottom:1px solid #fff"></div><svg class="b" style="left:11px;top:77px;overflow:visible" width="16" height="16" viewBox="0 0 16 16"><rect x="2.500" y="4.500" width="10" height="10" fill="#80E8D0" stroke="#000"/><rect x="2.500" y="1.500" width="2" height="4" fill="#000"/><path d="M5.500 12v-4.500l4 4.500v-4.500" stroke="#000" stroke-width="1.200" fill="none"/><path d="M.5 8L7.500 1l7 7" stroke="#F01010" stroke-width="1.400" fill="none"/></svg><svg class="b" style="left:41px;top:77px;overflow:visible" width="16" height="16" viewBox="0 0 16 16"><defs><radialGradient id="cg" cx=".4" cy=".35" r=".7"><stop offset="0" stop-color="#FFF0C0"/><stop offset=".7" stop-color="#F0CC70"/><stop offset="1" stop-color="#B89040"/></radialGradient></defs><circle cx="7.500" cy="8" r="7" fill="url(#cg)" stroke="#907030" stroke-width=".8"/><path d="M7.500 4v4.500l3 3" stroke="#000" stroke-width="1.300" fill="none"/><circle cx="7.500" cy="8.500" r="1.100" fill="#000"/><g fill="#000"><circle cx="7.500" cy="2.800" r=".6"/><circle cx="7.500" cy="13.200" r=".6"/><circle cx="2.300" cy="8" r=".6"/><circle cx="12.700" cy="8" r=".6"/></g></svg><svg class="b" style="left:69px;top:77px;overflow:visible" width="16" height="16" viewBox="0 0 16 16"><rect x="0" y="0" width="15" height="15" fill="#000"/><rect x="1" y="1" width="13" height="8" fill="#A8C8F0"/><path d="M2 7.500c3.500-5.500 7.500-5.500 11 0" stroke="#fff" stroke-width="1.500" fill="none"/><path d="M2.500 7c3-4 7-4 10 0" stroke="#000" stroke-width=".8" fill="none"/><path d="M4.500 8c2-1.500 4-1.500 6 0" stroke="#fff" stroke-width="1" fill="none"/><g transform="translate(3.300 14) scale(.9 1)"><text x="0" y="0" font-size="6.500" font-weight="bold" font-family="Liberation Sans" fill="#fff">Hz</text></g></svg><svg class="b" style="left:101px;top:77px;overflow:visible" width="16" height="16" viewBox="0 0 16 16"><rect x=".7" y=".7" width="14" height="13.500" fill="#F8E8A0" stroke="#000" stroke-width="1.400"/><rect x=".7" y=".7" width="14" height="2.300" fill="#000"/><path d="M9.500 1.600h1M11.500 1.600h1M13.300 1.600h.8" stroke="#fff"/><path d="M2 7.500V5H4.875V7.500H7.750V5H10.625V7.500H13.500" stroke="#000" stroke-width="1.300" fill="none"/><path d="M2 12V9.500H4.875V12H7.750V9.500H10.625V12H13.500" stroke="#000" stroke-width="1.300" fill="none"/></svg><svg class="b" style="left:130px;top:77px;overflow:visible" width="16" height="16" viewBox="0 0 16 16"><rect x=".7" y=".7" width="14" height="13.500" fill="#90F090" stroke="#000" stroke-width="1.400"/><rect x=".7" y=".7" width="14" height="2.300" fill="#000"/><path d="M9.500 1.600h1M11.500 1.600h1M13.300 1.600h.8" stroke="#fff"/><g fill="none" stroke="#000" stroke-width=".9"><rect x="2.500" y="4.500" width="2" height="3.500"/><rect x="8.500" y="4.500" width="2" height="3.500"/><rect x="2.500" y="9.500" width="2" height="3.500"/><rect x="8.500" y="9.500" width="2" height="3.500"/><path d="M6.500 4v4.500M12.500 4v4.500M6.500 9v4.500M12.500 9v4.500"/></g></svg><svg class="b" style="left:158px;top:77px;overflow:visible" width="16" height="16" viewBox="0 0 16 16"><path d="M.5 3.500L4 .5h10.500v10L11 14H.5z" fill="#5C98E0"/><path d="M.5 3.500h10.500V14H.5z" fill="#78A8E8"/><path d="M.5 3.500L4 .5h10.500L11 3.500z" fill="#A0C4F0"/><path d="M0 8h11l3.500-3M5.500 3v11M5.500 3.500L9 .5M11 3.500V14M.5 3.500h10.500L14.500 .5" stroke="#F0D020" stroke-width="1.100" fill="none"/></svg><svg class="b" style="left:194px;top:77px;overflow:visible" width="16" height="16" viewBox="0 0 16 16"><path d="M1.500 2.500v9.500l2.200-2 1.900 4 1.600-.7-1.900-4h3.200z" fill="#C8D8F8" stroke="#000" stroke-width="1.100"/><path d="M4.300 10.500l1.500 3.200 1.200-.5-1.500-3.200z" fill="#000"/></svg><svg class="b" style="left:215px;top:77px;overflow:visible" width="16" height="16" viewBox="0 0 16 16"><defs><linearGradient id="pk" x1="0" y1="0" x2="1" y2="1"><stop offset="0" stop-color="#F8C8F8"/><stop offset="1" stop-color="#E850E8"/></linearGradient></defs><rect x=".8" y=".8" width="10.500" height="14.500" fill="url(#pk)" stroke="#000" stroke-width="1.300" stroke-dasharray="2.500 1.500"/><path d="M1.200 2v10l2.500-2.300 2 4.300 1.800-.9-2-4.100 3.400-.2z" fill="#909090" stroke="#000" stroke-width=".9"/></svg><svg class="b" style="left:236px;top:77px;overflow:visible" width="16" height="16" viewBox="0 0 16 16"><g transform="translate(-.5 -.5) scale(1.080 1.030)"><path d="M5 15.500c-.8-2-4.300-4.500-4.300-6 0-1.200 1.500-1.300 2.600 0V4.500c0-1.500 2-1.500 2 0V2.500c0-1.500 2.100-1.500 2.100 0v.7c0-1.500 2.100-1.500 2.100 0v1.600c0-1.400 2-1.400 2 0 .8 0 2 .3 2 1.700V10c0 2.200-1 3.500-1.500 5.500z" fill="#FCE4B8" stroke="#907850" stroke-width="1"/><path d="M5.300 4.500v4M7.400 3.500v5M9.500 4.500v4M11.500 5v4" stroke="#A89068" stroke-width=".8"/></g></svg><svg class="b" style="left:259px;top:77px;overflow:visible" width="16" height="16" viewBox="0 0 16 16"><path d="M0.300 2.900V0.600H2.1125V2.900H3.925V0.600H5.7375V2.900H7.550V0.600H9.3625V2.900H11.175V0.600H12.9875V2.900H14.800" stroke="#F01010" stroke-width="1" fill="none"/><defs><linearGradient id="og" x1="0" y1="0" x2="1" y2="1"><stop offset="0" stop-color="#FFE0B8"/><stop offset="1" stop-color="#F09848"/></linearGradient></defs><rect x=".6" y="5" width="13.800" height="9.800" fill="url(#og)" stroke="#000" stroke-width="1.200"/><path d="M3.300 14.500V7.500M6.300 14.500V9.500M9.300 14.500V8M12.200 14.500v-3" stroke="#000" stroke-width="1.500"/></svg><svg class="b" style="left:292px;top:77px;overflow:visible" width="16" height="16" viewBox="0 0 16 16"><rect x=".7" y=".7" width="14" height="13.500" fill="#A0B8F0" stroke="#000" stroke-width="1.400"/><path d="M2.500 4.800V3H5.125V4.800H7.750V3H10.375V4.800H13" stroke="#000" stroke-width="1.200" fill="none"/><path d="M2.500 8.400V6.600H5.125V8.400H7.750V6.600H10.375V8.400H13" stroke="#000" stroke-width="1.200" fill="none"/><path d="M2.500 12V10.200H5.125V12H7.750V10.200H10.375V12H13" stroke="#000" stroke-width="1.200" fill="none"/></svg><svg class="b" style="left:334px;top:77px;overflow:visible" width="16" height="16" viewBox="0 0 16 16"><path d="M11.500 .8L6.500 5.800" stroke="#000" stroke-width="2.600"/><path d="M11.300 1L6.500 5.800" stroke="#1060F0" stroke-width="1.300"/><path d="M5 3v5.500h5.500z" fill="#1060F0" stroke="#000" stroke-width=".9"/><path d="M0.300 12.500V10.500H2.050V12.500H3.800V10.500H5.550V12.500H7.300V10.500H9.050V12.500H10.800V10.500H12.550V12.500H14.300" stroke="#1070FF" stroke-width="1.200" fill="none"/></svg><svg class="b" style="left:452px;top:77px;overflow:visible" width="16" height="16" viewBox="0 0 16 16"><path d="M0.300 4.700V0.700H2.63333V4.700H4.96667V0.700H7.300V4.700H9.63333V0.700H11.9667V4.700H14.300" stroke="#F01010" stroke-width="1.300" fill="none"/><path d="M6 8.500h5.500L6 14z" transform="translate(0 0)" fill="#000"/><path d="M6.500 9l6.500 6" stroke="#000" stroke-width="2.800"/><path d="M7.800 10.300l5 4.600" stroke="#E01010" stroke-width="1.200"/><path d="M7 9.500h3L7 12.500z" fill="#E01010"/></svg><svg class="b" style="left:483px;top:77px;overflow:visible" width="16" height="16" viewBox="0 0 16 16"><rect x=".3" y="4" width="5.800" height="2.200" fill="#F01010"/><path d="M8.300 3v6h6l-2-2 3.200-3.200-2-2-3.200 3.200z" fill="#20C0F0"/><g transform="translate(.2 15.300) scale(.95 1)"><text x="0" y="0" font-size="6.500" font-family="Liberation Sans" fill="#000" stroke="#000" stroke-width=".25">B</text><text x="4.500" y="0" font-size="5.500" font-family="Liberation Sans" fill="#000" stroke="#000" stroke-width=".25">A</text><text x="8.500" y="0" font-size="5.500" font-family="Liberation Sans" fill="#000" stroke="#000" stroke-width=".25">F</text></g></svg><svg class="b" style="left:506px;top:77px;overflow:visible" width="16" height="16" viewBox="0 0 16 16"><text x="-.3" y="8.600" font-size="11" font-weight="bold" font-family="Liberation Sans" fill="#000">A</text><path d="M8.300 3v6h6l-2-2 3.200-3.200-2-2-3.200 3.200z" fill="#F02020"/><g transform="translate(.2 15.300) scale(.95 1)"><text x="0" y="0" font-size="6.500" font-family="Liberation Sans" fill="#000" stroke="#000" stroke-width=".25">B</text><text x="4.500" y="0" font-size="5.500" font-family="Liberation Sans" fill="#000" stroke="#000" stroke-width=".25">A</text><text x="8.500" y="0" font-size="5.500" font-family="Liberation Sans" fill="#000" stroke="#000" stroke-width=".25">F</text></g></svg><svg class="b" style="left:529px;top:77px;overflow:visible" width="16" height="16" viewBox="0 0 16 16"><text x="-.3" y="8.600" font-size="11" font-weight="bold" font-family="Liberation Sans" fill="#000">B</text><path d="M8.300 3v6h6l-2-2 3.200-3.200-2-2-3.200 3.200z" fill="#F8B020"/><g transform="translate(.2 15.300) scale(.95 1)"><text x="0" y="0" font-size="6.500" font-family="Liberation Sans" fill="#000" stroke="#000" stroke-width=".25">B</text><text x="4.500" y="0" font-size="5.500" font-family="Liberation Sans" fill="#000" stroke="#000" stroke-width=".25">A</text><text x="8.500" y="0" font-size="5.500" font-family="Liberation Sans" fill="#000" stroke="#000" stroke-width=".25">F</text></g></svg><svg class="b" style="left:552px;top:77px;overflow:visible" width="16" height="16" viewBox="0 0 16 16"><text x="-.3" y="8.600" font-size="11" font-weight="bold" font-family="Liberation Sans" fill="#000">T</text><path d="M8.300 3v6h6l-2-2 3.200-3.200-2-2-3.200 3.200z" fill="#A030F0"/><g transform="translate(.2 15.300) scale(.95 1)"><text x="0" y="0" font-size="6.500" font-family="Liberation Sans" fill="#000" stroke="#000" stroke-width=".25">B</text><text x="4.500" y="0" font-size="5.500" font-family="Liberation Sans" fill="#000" stroke="#000" stroke-width=".25">A</text><text x="8.500" y="0" font-size="5.500" font-family="Liberation Sans" fill="#000" stroke="#000" stroke-width=".25">F</text></g></svg><svg class="b" style="left:575px;top:77px;overflow:visible" width="16" height="16" viewBox="0 0 16 16"><path d="M.3 5h6.500M3.500 1.700v6.500" stroke="#F01010" stroke-width="2"/><path d="M8.300 3v6h6l-2-2 3.200-3.200-2-2-3.200 3.200z" fill="#F8B020"/><g transform="translate(.2 15.300) scale(.95 1)"><text x="0" y="0" font-size="6.500" font-family="Liberation Sans" fill="#000" stroke="#000" stroke-width=".25">B</text><text x="4.500" y="0" font-size="5.500" font-family="Liberation Sans" fill="#000" stroke="#000" stroke-width=".25">A</text><text x="8.500" y="0" font-size="5.500" font-family="Liberation Sans" fill="#000" stroke="#000" stroke-width=".25">F</text></g></svg><svg class="b" style="left:605px;top:77px;overflow:visible" width="16" height="16" viewBox="0 0 16 16"><path d="M1.500 1h4.500v2h3V1h4.500v2.500l1.500 6.500v5h-5.500V9.500h-4V15H0v-5l1.500-6.500z" fill="#000"/><rect x="1.800" y="11" width="2" height="2" fill="#fff"/><rect x="11.200" y="11" width="2" height="2" fill="#fff"/><path d="M3 2.500v4M12 2.500v4" stroke="#fff" stroke-width=".9"/><rect x="6.300" y="5" width="2.400" height="2.300" fill="#fff"/><path d="M5.700 3.500v6M9.300 3.500v6" stroke="#fff" stroke-width=".6"/></svg><svg class="b" style="left:628px;top:77px;overflow:visible" width="16" height="16" viewBox="0 0 16 16"><path d="M1.500 1.500v11q0 1 1.200 1" stroke="#000" stroke-width="1.100" fill="none"/><path d="M4.500 7.500l4.500-4v2.600h4v2.800H9v2.600z" fill="#1838E8" stroke="#000" stroke-width=".6"/></svg><svg class="b" style="left:651px;top:77px;overflow:visible" width="16" height="16" viewBox="0 0 16 16"><path d="M12.500 13.500v-11q0-1 1.200-1" stroke="#000" stroke-width="1.100" fill="none"/><path d="M10.500 7.500l-4.500-4v2.600H2v2.800h4v2.600z" fill="#20D020" stroke="#000" stroke-width=".6"/></svg><svg class="b" style="left:705px;top:77px;overflow:visible" width="16" height="16" viewBox="0 0 16 16"><g transform="translate(.3 0) scale(.76 1)"><text x="0" y="7" font-size="9.300" font-weight="bold" font-family="Liberation Sans" fill="#F01010">BUS</text></g><rect x="0" y="9" width="15" height="6" fill="#000"/><rect x="2" y="10" width="11" height="1" fill="#F8F8D8"/><rect x="2" y="11" width="11" height="1" fill="#F8E050"/><rect x="2" y="12" width="11" height="1" fill="#F8B040"/><rect x="2" y="13" width="11" height="1" fill="#F07828"/></svg><svg class="b" style="left:729px;top:77px;overflow:visible" width="16" height="16" viewBox="0 0 16 16"><path d="M3.500 .5h3.500v5h3v8h-3" stroke="#C4C8D0" stroke-width="1" fill="none" stroke-dasharray="1.200 .8"/><path d="M.8 7.300l2.700-3 2.700 3v2H.8z" fill="#ACACB0"/><path d="M7.300 8.300h5.400v2l-2.700 3-2.700-3z" fill="#ACACB0"/></svg><svg class="b" style="left:684px;top:78px;overflow:visible" width="16" height="16" viewBox="0 0 16 16"><defs><linearGradient id="rg" x1="0" y1="0" x2="0" y2="1"><stop offset="0" stop-color="#F07070"/><stop offset="1" stop-color="#FCD8D8"/></linearGradient></defs><rect x=".7" y=".7" width="13.800" height="13.800" fill="url(#rg)" stroke="#000" stroke-width="1.400"/><rect x=".7" y=".7" width="13.800" height="2.200" fill="#000"/><path d="M9.500 1.500h1M11.500 1.500h1M13.300 1.500h.8" stroke="#fff"/><path d="M2.200 7.100V4.300H4.825V7.100H7.450V4.300H10.075V7.100H12.700" stroke="#F01010" stroke-width="1.300" fill="none"/><circle cx="7.800" cy="10.800" r="3" fill="#F8C0C0" stroke="#000" stroke-width="1"/><path d="M7.800 9v2l1.500 1" stroke="#000" stroke-width=".9" fill="none"/><path d="M5.500 14.500l1-1.200M10 14.500l-1-1.200" stroke="#000"/></svg><div class="b" style="left:32px;top:75px;width:1px;height:20px;background:#ACA899"></div><div class="b" style="left:33px;top:75px;width:1px;height:20px;background:#FFFFFF"></div><div class="b" style="left:61px;top:75px;width:1px;height:20px;background:#ACA899"></div><div class="b" style="left:62px;top:75px;width:1px;height:20px;background:#FFFFFF"></div><div class="b" style="left:123px;top:75px;width:1px;height:20px;background:#ACA899"></div><div class="b" style="left:124px;top:75px;width:1px;height:20px;background:#FFFFFF"></div><div class="b" style="left:151px;top:75px;width:1px;height:20px;background:#ACA899"></div><div class="b" style="left:152px;top:75px;width:1px;height:20px;background:#FFFFFF"></div><div class="b" style="left:326px;top:75px;width:1px;height:20px;background:#ACA899"></div><div class="b" style="left:327px;top:75px;width:1px;height:20px;background:#FFFFFF"></div><div class="b" style="left:597px;top:75px;width:1px;height:20px;background:#ACA899"></div><div class="b" style="left:598px;top:75px;width:1px;height:20px;background:#FFFFFF"></div><div class="b" style="left:750px;top:75px;width:1px;height:20px;background:#ACA899"></div><div class="b" style="left:751px;top:75px;width:1px;height:20px;background:#FFFFFF"></div><svg class="b" style="left:315px;top:84px" width="6" height="3"><path d="M0 0h6L3 3z" fill="#000"/></svg><div class="b" style="left:355px;top:74px;width:92px;height:22px;background:#fff;border-top:2px solid #8C8A7C;border-left:2px solid #8C8A7C;border-bottom:1px solid #fff;border-right:1px solid #fff;"></div><div class="b" style="left:356px;top:75px;width:90px;height:20px;border-top:1px solid #6A6858;border-left:1px solid #6A6858;border-right:1px solid #ECE9D8;border-bottom:1px solid #ECE9D8"></div><div class="b" style="left:430px;top:76px;width:16px;height:19px;background:#ECE9D8;border-top:1px solid #ECE9D8;border-left:1px solid #fff;border-right:2px solid #7A7868;border-bottom:2px solid #7A7868"></div><svg class="b" style="left:433.5px;top:83px" width="8" height="4"><path d="M0 0h8L4 4z" fill="#000"/></svg><div class="t" style="left:359px;top:78px;font:14px/14px 'Liberation Sans';color:#000;-webkit-text-stroke:0.5px #000">409.5ns</div><div class="b" style="left:817px;top:74px;width:56px;height:22px;background:#fff;border-top:2px solid #8C8A7C;border-left:2px solid #8C8A7C;border-bottom:1px solid #fff;border-right:1px solid #fff;"></div><div class="b" style="left:818px;top:75px;width:54px;height:20px;border-top:1px solid #6A6858;border-left:1px solid #6A6858;border-right:1px solid #ECE9D8;border-bottom:1px solid #ECE9D8"></div><div class="b" style="left:856px;top:76px;width:16px;height:19px;background:#ECE9D8;border-top:1px solid #ECE9D8;border-left:1px solid #fff;border-right:2px solid #7A7868;border-bottom:2px solid #7A7868"></div><svg class="b" style="left:859.5px;top:83px" width="8" height="4"><path d="M0 0h8L4 4z" fill="#000"/></svg><div class="t" style="left:820px;top:78px;font:14px/14px 'Liberation Sans';color:#000;-webkit-text-stroke:0.5px #000">50</div><div class="t" style="left:758px;top:78px;font:13px/13px 'Liberation Sans';color:#000;"><span class="c cjm" style="width:52px">波形高度</span></div><div class="t" style="left:885px;top:78px;font:13px/13px 'Liberation Sans';color:#000;"><span class="c cjm" style="width:52px">觸發延遲</span></div><div class="b" style="left:955px;top:74px;width:68px;height:21px;border:1px solid #000;background:#ECE9D8"></div><div class="t" style="left:977px;top:77px;font:bold 14px/14px 'Liberation Sans';color:#A6A394;text-shadow:1px 1px 0 #fff">5ns</div>
<!-- info -->
<div class="b" style="left:0px;top:97px;width:1024px;height:36px;background:#ECE9D8"></div><div class="b" style="left:1px;top:97px;width:1px;height:35px;background:#fff"></div><div class="b" style="left:0px;top:132px;width:1024px;height:1px;background:#ACA899"></div><div class="b" style="left:0px;top:133px;width:1024px;height:1px;background:#fff"></div><div class="t" style="left:15px;top:98px;font:12px/12px 'Liberation Serif';color:#000;"><span class="c cj" style="width:24px">每格</span></div><div class="t" style="left:39px;top:98px;font:12px/12px 'Liberation Serif';color:#000;"><span style="display:inline-block;transform-origin:0 84%;transform:scale(0.9877,1.120);-webkit-text-stroke:0.2px #000;">:409.5ns</span></div><div class="t" style="left:15px;top:114px;font:12px/12px 'Liberation Serif';color:#000;"><span class="c cj" style="width:24px">總數</span></div><div class="t" style="left:39px;top:114px;font:12px/12px 'Liberation Serif';color:#000;"><span style="display:inline-block;transform-origin:0 84%;transform:scale(0.9893,1.120);-webkit-text-stroke:0.2px #000;">:163.84us</span></div><div class="t" style="left:220px;top:98px;font:12px/12px 'Liberation Serif';color:#000;"><span class="c cj" style="width:36px">中心點</span></div><div class="t" style="left:256px;top:98px;font:12px/12px 'Liberation Serif';color:#000;"><span style="display:inline-block;transform-origin:0 84%;transform:scale(0.8998,1.120);-webkit-text-stroke:0.2px #000;">:0ns</span></div><div class="t" style="left:220px;top:114px;font:12px/12px 'Liberation Serif';color:#000;"><span class="c cj" style="width:36px">觸發點</span></div><div class="t" style="left:256px;top:114px;font:12px/12px 'Liberation Serif';color:#000;"><span style="display:inline-block;transform-origin:0 84%;transform:scale(0.8998,1.120);-webkit-text-stroke:0.2px #000;">:0ns</span></div><div class="t" style="left:423px;top:98px;font:12px/12px 'Liberation Serif';color:#000;"><span style="display:inline-block;transform-origin:0 84%;transform:scale(0.9594,1.120);-webkit-text-stroke:0.2px #000;">Ds Pos:-016.375us</span></div><div class="t" style="left:423px;top:114px;font:12px/12px 'Liberation Serif';color:#000;"><span style="display:inline-block;transform-origin:0 84%;transform:scale(0.9714,1.120);-webkit-text-stroke:0.2px #000;">Dp Pos:147.465us</span></div><div class="t" style="left:627px;top:98px;font:12px/12px 'Liberation Serif';color:#000;"><span style="display:inline-block;transform-origin:0 84%;transform:scale(0.9716,1.120);-webkit-text-stroke:0.2px #000;">A - T = 2.825ms</span></div><div class="t" style="left:627px;top:114px;font:12px/12px 'Liberation Serif';color:#000;"><span style="display:inline-block;transform-origin:0 84%;transform:scale(0.9798,1.120);-webkit-text-stroke:0.2px #000;">B - T = 2.008ms</span></div><div class="t" style="left:831px;top:98px;font:12px/12px 'Liberation Serif';color:#000;"><span style="display:inline-block;transform-origin:0 84%;transform:scale(0.9727,1.120);-webkit-text-stroke:0.2px #000;">A - B = 2.506us</span></div><div class="t" style="left:831px;top:114px;font:12px/12px 'Liberation Serif';color:#000;"><span class="c cj" style="width:36px">壓縮率</span></div><div class="t" style="left:867px;top:114px;font:12px/12px 'Liberation Serif';color:#000;"><span style="display:inline-block;transform-origin:0 84%;transform:scale(1.0000,1.120);-webkit-text-stroke:0.2px #000;">:</span></div><div class="t" style="left:871px;top:114px;font:12px/12px 'Liberation Serif';color:#000;"><span class="c cj" style="width:12px">否</span></div><div class="b" style="left:530px;top:98px;width:1px;height:14px;background:#fff"></div><div class="b" style="left:531px;top:98px;width:1px;height:14px;background:#D8D4C4"></div><svg class="b" style="left:534px;top:103px" width="8" height="4"><path d="M0 0h8L4 4z" fill="#000"/></svg><div class="b" style="left:524px;top:115px;width:1px;height:14px;background:#fff"></div><div class="b" style="left:525px;top:115px;width:1px;height:14px;background:#D8D4C4"></div><svg class="b" style="left:528px;top:120px" width="8" height="4"><path d="M0 0h8L4 4z" fill="#000"/></svg><div class="b" style="left:722px;top:98px;width:1px;height:14px;background:#fff"></div><div class="b" style="left:723px;top:98px;width:1px;height:14px;background:#D8D4C4"></div><svg class="b" style="left:726px;top:103px" width="8" height="4"><path d="M0 0h8L4 4z" fill="#000"/></svg><div class="b" style="left:722px;top:115px;width:1px;height:14px;background:#fff"></div><div class="b" style="left:723px;top:115px;width:1px;height:14px;background:#D8D4C4"></div><svg class="b" style="left:726px;top:120px" width="8" height="4"><path d="M0 0h8L4 4z" fill="#000"/></svg><div class="b" style="left:926px;top:98px;width:1px;height:14px;background:#fff"></div><div class="b" style="left:927px;top:98px;width:1px;height:14px;background:#D8D4C4"></div><svg class="b" style="left:930px;top:103px" width="8" height="4"><path d="M0 0h8L4 4z" fill="#000"/></svg>
<!-- panes -->
<div class="b" style="left:0px;top:137px;width:120px;height:595px;background:#BABABA;border-left:2px solid #ACA899;border-top:1px solid #ACA899;border-right:1px solid #C8C4B4"></div><div class="b" style="left:2px;top:165px;width:117px;height:1px;background:#A8A598"></div><div class="t" style="left:11px;top:146px;font:12px/12px 'Liberation Serif';color:#000;"><span class="c cj" style="width:48px">通道名稱</span></div><div class="b" style="left:8px;top:184px;width:13px;height:13px;border:1px solid #ADA794;background:#BABABA"></div><div class="b" style="left:10px;top:189px;width:9px;height:2px;background:#000"></div><div class="b" style="left:20px;top:191px;width:9px;height:1px;background:repeating-linear-gradient(to right,#B2AB94 0 1px,transparent 1px 2px)"></div><div class="b" style="left:30px;top:192px;width:26px;height:1px;background:#707070"></div><div class="t" style="left:61px;top:185px;font:12px/12px 'Liberation Serif';color:#000;"><span style="display:inline-block;transform-origin:0 84%;transform:scale(0.9119,1.120);-webkit-text-stroke:0.2px #000;">Bus1</span></div><div class="b" style="left:14px;top:198px;width:1px;height:534px;background:repeating-linear-gradient(to bottom,#B2AB94 0 1px,transparent 1px 2px)"></div><div class="b" style="left:43px;top:216px;width:1px;height:375px;background:repeating-linear-gradient(to bottom,#B2AB94 0 1px,transparent 1px 2px)"></div><div class="b" style="left:43px;top:242px;width:15px;height:1px;background:repeating-linear-gradient(to right,#B2AB94 0 1px,transparent 1px 2px)"></div><svg class="b" style="left:74px;top:234px" width="13" height="13" viewBox="0 0 13 13"><path d="M11.800 1L7 5.800" stroke="#8B1010" stroke-width="1.300"/><path d="M2.300 10.700L6.800 6.200" stroke="#8B1010" stroke-width="4" stroke-linecap="round"/><path d="M6 4.500L8.500 7" stroke="#8B1010" stroke-width="1.500"/></svg><div class="b" style="left:88px;top:217px;width:18px;height:48px;background:#0A64F8"></div><div class="t" style="left:90px;top:235px;font:12px/12px 'Liberation Serif';color:#fff;"><span style="display:inline-block;transform-origin:0 84%;transform:scale(0.9069,1.120);-webkit-text-stroke:0.2px #fff;">A0</span></div><div class="t" style="left:109px;top:235px;width:10px;overflow:hidden;font:12px/12px 'Liberation Serif';color:#8C8C8C">A0</div><div class="b" style="left:43px;top:292px;width:15px;height:1px;background:repeating-linear-gradient(to right,#B2AB94 0 1px,transparent 1px 2px)"></div><svg class="b" style="left:74px;top:284px" width="13" height="13" viewBox="0 0 13 13"><path d="M11.800 1L7 5.800" stroke="#F01010" stroke-width="1.300"/><path d="M2.300 10.700L6.800 6.200" stroke="#F01010" stroke-width="4" stroke-linecap="round"/><path d="M6 4.500L8.500 7" stroke="#F01010" stroke-width="1.500"/></svg><div class="t" style="left:90px;top:285px;font:12px/12px 'Liberation Serif';color:#000;"><span style="display:inline-block;transform-origin:0 84%;transform:scale(0.9069,1.120);-webkit-text-stroke:0.2px #000;">A1</span></div><div class="t" style="left:109px;top:285px;width:10px;overflow:hidden;font:12px/12px 'Liberation Serif';color:#8C8C8C">A1</div><div class="b" style="left:43px;top:342px;width:15px;height:1px;background:repeating-linear-gradient(to right,#B2AB94 0 1px,transparent 1px 2px)"></div><svg class="b" style="left:74px;top:334px" width="13" height="13" viewBox="0 0 13 13"><path d="M11.800 1L7 5.800" stroke="#D04818" stroke-width="1.300"/><path d="M2.300 10.700L6.800 6.200" stroke="#D04818" stroke-width="4" stroke-linecap="round"/><path d="M6 4.500L8.500 7" stroke="#D04818" stroke-width="1.500"/></svg><div class="t" style="left:90px;top:335px;font:12px/12px 'Liberation Serif';color:#000;"><span style="display:inline-block;transform-origin:0 84%;transform:scale(0.9069,1.120);-webkit-text-stroke:0.2px #000;">A2</span></div><div class="t" style="left:109px;top:335px;width:10px;overflow:hidden;font:12px/12px 'Liberation Serif';color:#8C8C8C">A2</div><div class="b" style="left:43px;top:392px;width:15px;height:1px;background:repeating-linear-gradient(to right,#B2AB94 0 1px,transparent 1px 2px)"></div><svg class="b" style="left:74px;top:384px" width="13" height="13" viewBox="0 0 13 13"><path d="M11.800 1L7 5.800" stroke="#F8F000" stroke-width="1.300"/><path d="M2.300 10.700L6.800 6.200" stroke="#F8F000" stroke-width="4" stroke-linecap="round"/><path d="M6 4.500L8.500 7" stroke="#F8F000" stroke-width="1.500"/></svg><div class="t" style="left:90px;top:385px;font:12px/12px 'Liberation Serif';color:#000;"><span style="display:inline-block;transform-origin:0 84%;transform:scale(0.9069,1.120);-webkit-text-stroke:0.2px #000;">A3</span></div><div class="t" style="left:109px;top:385px;width:10px;overflow:hidden;font:12px/12px 'Liberation Serif';color:#8C8C8C">A3</div><div class="b" style="left:43px;top:442px;width:15px;height:1px;background:repeating-linear-gradient(to right,#B2AB94 0 1px,transparent 1px 2px)"></div><svg class="b" style="left:74px;top:434px" width="13" height="13" viewBox="0 0 13 13"><path d="M11.800 1L7 5.800" stroke="#10F010" stroke-width="1.300"/><path d="M2.300 10.700L6.800 6.200" stroke="#10F010" stroke-width="4" stroke-linecap="round"/><path d="M6 4.500L8.500 7" stroke="#10F010" stroke-width="1.500"/></svg><div class="t" style="left:90px;top:435px;font:12px/12px 'Liberation Serif';color:#000;"><span style="display:inline-block;transform-origin:0 84%;transform:scale(0.9069,1.120);-webkit-text-stroke:0.2px #000;">A4</span></div><div class="t" style="left:109px;top:435px;width:10px;overflow:hidden;font:12px/12px 'Liberation Serif';color:#8C8C8C">A4</div><div class="b" style="left:43px;top:492px;width:15px;height:1px;background:repeating-linear-gradient(to right,#B2AB94 0 1px,transparent 1px 2px)"></div><svg class="b" style="left:74px;top:484px" width="13" height="13" viewBox="0 0 13 13"><path d="M11.800 1L7 5.800" stroke="#1010F0" stroke-width="1.300"/><path d="M2.300 10.700L6.800 6.200" stroke="#1010F0" stroke-width="4" stroke-linecap="round"/><path d="M6 4.500L8.500 7" stroke="#1010F0" stroke-width="1.500"/></svg><div class="t" style="left:90px;top:485px;font:12px/12px 'Liberation Serif';color:#000;"><span style="display:inline-block;transform-origin:0 84%;transform:scale(0.9069,1.120);-webkit-text-stroke:0.2px #000;">A5</span></div><div class="t" style="left:109px;top:485px;width:10px;overflow:hidden;font:12px/12px 'Liberation Serif';color:#8C8C8C">A5</div><div class="b" style="left:43px;top:542px;width:15px;height:1px;background:repeating-linear-gradient(to right,#B2AB94 0 1px,transparent 1px 2px)"></div><svg class="b" style="left:74px;top:534px" width="13" height="13" viewBox="0 0 13 13"><path d="M11.800 1L7 5.800" stroke="#900890" stroke-width="1.300"/><path d="M2.300 10.700L6.800 6.200" stroke="#900890" stroke-width="4" stroke-linecap="round"/><path d="M6 4.500L8.500 7" stroke="#900890" stroke-width="1.500"/></svg><div class="t" style="left:90px;top:535px;font:12px/12px 'Liberation Serif';color:#000;"><span style="display:inline-block;transform-origin:0 84%;transform:scale(0.9069,1.120);-webkit-text-stroke:0.2px #000;">A6</span></div><div class="t" style="left:109px;top:535px;width:10px;overflow:hidden;font:12px/12px 'Liberation Serif';color:#8C8C8C">A6</div><div class="b" style="left:43px;top:592px;width:15px;height:1px;background:repeating-linear-gradient(to right,#B2AB94 0 1px,transparent 1px 2px)"></div><svg class="b" style="left:74px;top:584px" width="13" height="13" viewBox="0 0 13 13"><path d="M11.800 1L7 5.800" stroke="#888888" stroke-width="1.300"/><path d="M2.300 10.700L6.800 6.200" stroke="#888888" stroke-width="4" stroke-linecap="round"/><path d="M6 4.500L8.500 7" stroke="#888888" stroke-width="1.500"/></svg><div class="t" style="left:90px;top:585px;font:12px/12px 'Liberation Serif';color:#000;"><span style="display:inline-block;transform-origin:0 84%;transform:scale(0.9069,1.120);-webkit-text-stroke:0.2px #000;">A7</span></div><div class="t" style="left:109px;top:585px;width:10px;overflow:hidden;font:12px/12px 'Liberation Serif';color:#8C8C8C">A7</div><div class="b" style="left:14px;top:642px;width:15px;height:1px;background:repeating-linear-gradient(to right,#B2AB94 0 1px,transparent 1px 2px)"></div><svg class="b" style="left:44px;top:634px" width="13" height="13" viewBox="0 0 13 13"><path d="M11.800 1L7 5.800" stroke="#8B1010" stroke-width="1.300"/><path d="M2.300 10.700L6.800 6.200" stroke="#8B1010" stroke-width="4" stroke-linecap="round"/><path d="M6 4.500L8.500 7" stroke="#8B1010" stroke-width="1.500"/></svg><div class="t" style="left:61px;top:635px;font:12px/12px 'Liberation Serif';color:#000;"><span style="display:inline-block;transform-origin:0 84%;transform:scale(1.0000,1.120);-webkit-text-stroke:0.2px #000;">B0</span></div><div class="t" style="left:80px;top:635px;font:12px/12px 'Liberation Serif';color:#8C8C8C;"><span style="display:inline-block;transform-origin:0 84%;transform:scale(1.0000,1.120);-webkit-text-stroke:0.2px #8C8C8C;">B0</span></div><div class="b" style="left:14px;top:692px;width:15px;height:1px;background:repeating-linear-gradient(to right,#B2AB94 0 1px,transparent 1px 2px)"></div><svg class="b" style="left:44px;top:684px" width="13" height="13" viewBox="0 0 13 13"><path d="M11.800 1L7 5.800" stroke="#F01010" stroke-width="1.300"/><path d="M2.300 10.700L6.800 6.200" stroke="#F01010" stroke-width="4" stroke-linecap="round"/><path d="M6 4.500L8.500 7" stroke="#F01010" stroke-width="1.500"/></svg><div class="t" style="left:61px;top:685px;font:12px/12px 'Liberation Serif';color:#000;"><span style="display:inline-block;transform-origin:0 84%;transform:scale(1.0000,1.120);-webkit-text-stroke:0.2px #000;">B1</span></div><div class="t" style="left:80px;top:685px;font:12px/12px 'Liberation Serif';color:#8C8C8C;"><span style="display:inline-block;transform-origin:0 84%;transform:scale(1.0000,1.120);-webkit-text-stroke:0.2px #8C8C8C;">B1</span></div><div class="b" style="left:123px;top:137px;width:60px;height:595px;background:#ECE9D8;border:1px solid #ACA899;border-bottom:none"></div><div class="b" style="left:124px;top:138px;width:57px;height:28px;border-bottom:2px solid #ACA899;border-right:1px solid #D4D0C0"></div><div class="t" style="left:129px;top:145px;font:12px/12px 'Liberation Serif';color:#000;"><span class="c cj" style="width:48px">觸發條件</span></div><div class="b" style="left:124px;top:166px;width:57px;height:48px;border:1px solid #ACA899;"></div><div class="b" style="left:125px;top:167px;width:55px;height:46px;border:1px solid #F4F2E6;"></div><div class="b" style="left:124px;top:216px;width:57px;height:49px;border-top:1px solid #000;border-left:1px solid #000;border-right:1px solid #fff;border-bottom:1px solid #fff"></div><div class="b" style="left:172px;top:217px;width:1px;height:46px;background:#9C9A8C"></div><svg class="b" style="left:174px;top:240px" width="5" height="4"><path d="M0 0h5L2.500 3.500z" fill="#000"/></svg><div class="b" style="left:124px;top:266px;width:57px;height:48px;border:1px solid #ACA899;"></div><div class="b" style="left:125px;top:267px;width:55px;height:46px;border:1px solid #F4F2E6;"></div><div class="b" style="left:124px;top:316px;width:57px;height:48px;border:1px solid #ACA899;"></div><div class="b" style="left:125px;top:317px;width:55px;height:46px;border:1px solid #F4F2E6;"></div><div class="b" style="left:124px;top:366px;width:57px;height:48px;border:1px solid #ACA899;"></div><div class="b" style="left:125px;top:367px;width:55px;height:46px;border:1px solid #F4F2E6;"></div><div class="b" style="left:124px;top:416px;width:57px;height:48px;border:1px solid #ACA899;"></div><div class="b" style="left:125px;top:417px;width:55px;height:46px;border:1px solid #F4F2E6;"></div><div class="b" style="left:124px;top:466px;width:57px;height:48px;border:1px solid #ACA899;"></div><div class="b" style="left:125px;top:467px;width:55px;height:46px;border:1px solid #F4F2E6;"></div><div class="b" style="left:124px;top:516px;width:57px;height:48px;border:1px solid #ACA899;"></div><div class="b" style="left:125px;top:517px;width:55px;height:46px;border:1px solid #F4F2E6;"></div><div class="b" style="left:124px;top:566px;width:57px;height:48px;border:1px solid #ACA899;"></div><div class="b" style="left:125px;top:567px;width:55px;height:46px;border:1px solid #F4F2E6;"></div><div class="b" style="left:124px;top:616px;width:57px;height:48px;border:1px solid #ACA899;"></div><div class="b" style="left:125px;top:617px;width:55px;height:46px;border:1px solid #F4F2E6;"></div><div class="b" style="left:124px;top:666px;width:57px;height:48px;border:1px solid #ACA899;"></div><div class="b" style="left:125px;top:667px;width:55px;height:46px;border:1px solid #F4F2E6;"></div><div class="b" style="left:124px;top:716px;width:57px;height:16px;border:1px solid #ACA899;border-bottom:none"></div><div class="b" style="left:125px;top:717px;width:55px;height:14px;border:1px solid #F4F2E6;border-bottom:none"></div><svg class="b" style="left:146px;top:234px" width="13" height="13" viewBox="0 0 13 13"><rect x=".5" y=".5" width="12" height="12" fill="#C0C0C0" stroke="#767676" stroke-dasharray="1 1" shape-rendering="crispEdges"/><path d="M.5 11h4L8.500 2h4" stroke="#000" stroke-width="1.800" fill="none"/></svg><svg class="b" style="left:146px;top:284px" width="13" height="13" viewBox="0 0 13 13"><rect x=".5" y=".5" width="12" height="12" fill="#C0C0C0" stroke="#767676" stroke-dasharray="1 1" shape-rendering="crispEdges"/><path d="M1 1l11 11M12 1L1 12" stroke="#6C6C6C" stroke-width=".9"/></svg><svg class="b" style="left:146px;top:334px" width="13" height="13" viewBox="0 0 13 13"><rect x=".5" y=".5" width="12" height="12" fill="#C0C0C0" stroke="#767676" stroke-dasharray="1 1" shape-rendering="crispEdges"/><path d="M1 1l11 11M12 1L1 12" stroke="#6C6C6C" stroke-width=".9"/></svg><svg class="b" style="left:146px;top:384px" width="13" height="13" viewBox="0 0 13 13"><rect x=".5" y=".5" width="12" height="12" fill="#C0C0C0" stroke="#767676" stroke-dasharray="1 1" shape-rendering="crispEdges"/><path d="M1 1l11 11M12 1L1 12" stroke="#6C6C6C" stroke-width=".9"/></svg><svg class="b" style="left:146px;top:434px" width="13" height="13" viewBox="0 0 13 13"><rect x=".5" y=".5" width="12" height="12" fill="#C0C0C0" stroke="#767676" stroke-dasharray="1 1" shape-rendering="crispEdges"/><path d="M1 1l11 11M12 1L1 12" stroke="#6C6C6C" stroke-width=".9"/></svg><svg class="b" style="left:146px;top:484px" width="13" height="13" viewBox="0 0 13 13"><rect x=".5" y=".5" width="12" height="12" fill="#C0C0C0" stroke="#767676" stroke-dasharray="1 1" shape-rendering="crispEdges"/><path d="M1 1l11 11M12 1L1 12" stroke="#6C6C6C" stroke-width=".9"/></svg><svg class="b" style="left:146px;top:534px" width="13" height="13" viewBox="0 0 13 13"><rect x=".5" y=".5" width="12" height="12" fill="#C0C0C0" stroke="#767676" stroke-dasharray="1 1" shape-rendering="crispEdges"/><path d="M1 1l11 11M12 1L1 12" stroke="#6C6C6C" stroke-width=".9"/></svg><svg class="b" style="left:146px;top:584px" width="13" height="13" viewBox="0 0 13 13"><rect x=".5" y=".5" width="12" height="12" fill="#C0C0C0" stroke="#767676" stroke-dasharray="1 1" shape-rendering="crispEdges"/><path d="M1 1l11 11M12 1L1 12" stroke="#6C6C6C" stroke-width=".9"/></svg><svg class="b" style="left:146px;top:634px" width="13" height="13" viewBox="0 0 13 13"><rect x=".5" y=".5" width="12" height="12" fill="#C0C0C0" stroke="#767676" stroke-dasharray="1 1" shape-rendering="crispEdges"/><path d="M1 1l11 11M12 1L1 12" stroke="#6C6C6C" stroke-width=".9"/></svg><svg class="b" style="left:146px;top:684px" width="13" height="13" viewBox="0 0 13 13"><rect x=".5" y=".5" width="12" height="12" fill="#C0C0C0" stroke="#767676" stroke-dasharray="1 1" shape-rendering="crispEdges"/><path d="M1 1l11 11M12 1L1 12" stroke="#6C6C6C" stroke-width=".9"/></svg><div class="b" style="left:186px;top:137px;width:57px;height:595px;background:#ECE9D8;border:1px solid #ACA899;border-bottom:none"></div><div class="b" style="left:187px;top:138px;width:55px;height:28px;border-bottom:2px solid #ACA899;border-right:1px solid #D4D0C0"></div><div class="t" style="left:190px;top:145px;font:12px/12px 'Liberation Serif';color:#000;"><span class="c cj" style="width:48px">濾波條件</span></div><div class="b" style="left:188px;top:166px;width:53px;height:48px;border:1px solid #ACA899;"></div><div class="b" style="left:189px;top:167px;width:51px;height:46px;border:1px solid #F4F2E6;"></div><div class="b" style="left:188px;top:216px;width:53px;height:49px;border-top:1px solid #000;border-left:1px solid #000;border-right:1px solid #fff;border-bottom:1px solid #fff"></div><div class="b" style="left:233px;top:217px;width:1px;height:46px;background:#9C9A8C"></div><svg class="b" style="left:235px;top:240px" width="5" height="4"><path d="M0 0h5L2.500 3.500z" fill="#000"/></svg><div class="b" style="left:188px;top:266px;width:53px;height:48px;border:1px solid #ACA899;"></div><div class="b" style="left:189px;top:267px;width:51px;height:46px;border:1px solid #F4F2E6;"></div><div class="b" style="left:188px;top:316px;width:53px;height:48px;border:1px solid #ACA899;"></div><div class="b" style="left:189px;top:317px;width:51px;height:46px;border:1px solid #F4F2E6;"></div><div class="b" style="left:188px;top:366px;width:53px;height:48px;border:1px solid #ACA899;"></div><div class="b" style="left:189px;top:367px;width:51px;height:46px;border:1px solid #F4F2E6;"></div><div class="b" style="left:188px;top:416px;width:53px;height:48px;border:1px solid #ACA899;"></div><div class="b" style="left:189px;top:417px;width:51px;height:46px;border:1px solid #F4F2E6;"></div><div class="b" style="left:188px;top:466px;width:53px;height:48px;border:1px solid #ACA899;"></div><div class="b" style="left:189px;top:467px;width:51px;height:46px;border:1px solid #F4F2E6;"></div><div class="b" style="left:188px;top:516px;width:53px;height:48px;border:1px solid #ACA899;"></div><div class="b" style="left:189px;top:517px;width:51px;height:46px;border:1px solid #F4F2E6;"></div><div class="b" style="left:188px;top:566px;width:53px;height:48px;border:1px solid #ACA899;"></div><div class="b" style="left:189px;top:567px;width:51px;height:46px;border:1px solid #F4F2E6;"></div><div class="b" style="left:188px;top:616px;width:53px;height:48px;border:1px solid #ACA899;"></div><div class="b" style="left:189px;top:617px;width:51px;height:46px;border:1px solid #F4F2E6;"></div><div class="b" style="left:188px;top:666px;width:53px;height:48px;border:1px solid #ACA899;"></div><div class="b" style="left:189px;top:667px;width:51px;height:46px;border:1px solid #F4F2E6;"></div><div class="b" style="left:188px;top:716px;width:53px;height:16px;border:1px solid #ACA899;border-bottom:none"></div><div class="b" style="left:189px;top:717px;width:51px;height:14px;border:1px solid #F4F2E6;border-bottom:none"></div><svg class="b" style="left:208px;top:184px" width="13" height="13" viewBox="0 0 13 13"><rect x=".5" y=".5" width="12" height="12" fill="#C0C0C0" stroke="#767676" stroke-dasharray="1 1" shape-rendering="crispEdges"/><path d="M1 1l11 11M12 1L1 12" stroke="#6C6C6C" stroke-width=".9"/></svg><svg class="b" style="left:208px;top:234px" width="13" height="13" viewBox="0 0 13 13"><rect x=".5" y=".5" width="12" height="12" fill="#C0C0C0" stroke="#767676" stroke-dasharray="1 1" shape-rendering="crispEdges"/><path d="M1 1l11 11M12 1L1 12" stroke="#6C6C6C" stroke-width=".9"/></svg><svg class="b" style="left:208px;top:284px" width="13" height="13" viewBox="0 0 13 13"><rect x=".5" y=".5" width="12" height="12" fill="#C0C0C0" stroke="#767676" stroke-dasharray="1 1" shape-rendering="crispEdges"/><path d="M1 1l11 11M12 1L1 12" stroke="#6C6C6C" stroke-width=".9"/></svg><svg class="b" style="left:208px;top:334px" width="13" height="13" viewBox="0 0 13 13"><rect x=".5" y=".5" width="12" height="12" fill="#C0C0C0" stroke="#767676" stroke-dasharray="1 1" shape-rendering="crispEdges"/><path d="M1 1l11 11M12 1L1 12" stroke="#6C6C6C" stroke-width=".9"/></svg><svg class="b" style="left:208px;top:384px" width="13" height="13" viewBox="0 0 13 13"><rect x=".5" y=".5" width="12" height="12" fill="#C0C0C0" stroke="#767676" stroke-dasharray="1 1" shape-rendering="crispEdges"/><path d="M1 1l11 11M12 1L1 12" stroke="#6C6C6C" stroke-width=".9"/></svg><svg class="b" style="left:208px;top:434px" width="13" height="13" viewBox="0 0 13 13"><rect x=".5" y=".5" width="12" height="12" fill="#C0C0C0" stroke="#767676" stroke-dasharray="1 1" shape-rendering="crispEdges"/><path d="M1 1l11 11M12 1L1 12" stroke="#6C6C6C" stroke-width=".9"/></svg><svg class="b" style="left:208px;top:484px" width="13" height="13" viewBox="0 0 13 13"><rect x=".5" y=".5" width="12" height="12" fill="#C0C0C0" stroke="#767676" stroke-dasharray="1 1" shape-rendering="crispEdges"/><path d="M1 1l11 11M12 1L1 12" stroke="#6C6C6C" stroke-width=".9"/></svg><svg class="b" style="left:208px;top:534px" width="13" height="13" viewBox="0 0 13 13"><rect x=".5" y=".5" width="12" height="12" fill="#C0C0C0" stroke="#767676" stroke-dasharray="1 1" shape-rendering="crispEdges"/><path d="M1 1l11 11M12 1L1 12" stroke="#6C6C6C" stroke-width=".9"/></svg><svg class="b" style="left:208px;top:584px" width="13" height="13" viewBox="0 0 13 13"><rect x=".5" y=".5" width="12" height="12" fill="#C0C0C0" stroke="#767676" stroke-dasharray="1 1" shape-rendering="crispEdges"/><path d="M1 1l11 11M12 1L1 12" stroke="#6C6C6C" stroke-width=".9"/></svg><svg class="b" style="left:208px;top:634px" width="13" height="13" viewBox="0 0 13 13"><rect x=".5" y=".5" width="12" height="12" fill="#C0C0C0" stroke="#767676" stroke-dasharray="1 1" shape-rendering="crispEdges"/><path d="M1 1l11 11M12 1L1 12" stroke="#6C6C6C" stroke-width=".9"/></svg><svg class="b" style="left:208px;top:684px" width="13" height="13" viewBox="0 0 13 13"><rect x=".5" y=".5" width="12" height="12" fill="#C0C0C0" stroke="#767676" stroke-dasharray="1 1" shape-rendering="crispEdges"/><path d="M1 1l11 11M12 1L1 12" stroke="#6C6C6C" stroke-width=".9"/></svg><div class="b" style="left:243px;top:398px;width:3px;height:15px;background:#B4BCD8"></div><svg class="b" style="left:243px;top:400px" width="4" height="11"><path d="M3.300 .5v10L0 5.500z" fill="#000"/></svg>
<!-- wave -->
<div class="b" style="left:247px;top:138px;width:759px;height:594px;background:#fff"></div><div class="b" style="left:247px;top:137px;width:777px;height:1px;background:#ACA899"></div><div class="b" style="left:247px;top:138px;width:759px;height:28px;background:#C0C0C0"></div><div class="b" style="left:247px;top:166px;width:759px;height:1px;background:#000"></div><svg class="b" style="left:0;top:0;clip-path:inset(138px 18px 36px 247px)" width="1024" height="768" viewBox="0 0 1024 768"><path d="M247.5 160V166M262.5 161V165M277.5 161V165M292.5 161V165M307.5 161V165M322.5 160V166M337.5 161V165M352.5 161V165M367.5 161V165M382.5 161V165M397.5 160V166M412.5 161V165M427.5 161V165M442.5 161V165M457.5 161V165M472.5 160V166M487.5 161V165M502.5 161V165M517.5 161V165M532.5 161V165M547.5 160V166M562.5 161V165M577.5 161V165M592.5 161V165M607.5 161V165M622.5 160V166M637.5 161V165M652.5 161V165M667.5 161V165M682.5 161V165M697.5 160V166M712.5 161V165M727.5 161V165M742.5 161V165M757.5 161V165M772.5 160V166M787.5 161V165M802.5 161V165M817.5 161V165M832.5 161V165M847.5 160V166M862.5 161V165M877.5 161V165M892.5 161V165M907.5 161V165M922.5 160V166M937.5 161V165M952.5 161V165M967.5 161V165M982.5 161V165M997.5 160V166" stroke="#000" stroke-width="1" shape-rendering="crispEdges"/><path d="M311.5 169.500L317.5 213.500M317.5 169.500L311.5 213.500M388.5 169.500L394.5 213.500M394.5 169.500L388.5 213.500M465.5 169.500L471.5 213.500M471.5 169.500L465.5 213.500M542.5 169.500L548.5 213.500M548.5 169.500L542.5 213.500M619.5 169.500L625.5 213.500M625.5 169.500L619.5 213.500M696.5 169.500L702.5 213.500M702.5 169.500L696.5 213.500M773.5 169.500L779.5 213.500M779.5 169.500L773.5 213.500M850.5 169.500L856.5 213.500M856.5 169.500L850.5 213.500M927.5 169.500L933.5 213.500M933.5 169.500L927.5 213.500M250.5 169.500H311.5M250.5 213.500H311.5M317.5 169.500H388.5M317.5 213.500H388.5M394.5 169.500H465.5M394.5 213.500H465.5M471.5 169.500H542.5M471.5 213.500H542.5M548.5 169.500H619.5M548.5 213.500H619.5M625.5 169.500H696.5M625.5 213.500H696.5M702.5 169.500H773.5M702.5 213.500H773.5M779.5 169.500H850.5M779.5 213.500H850.5M856.5 169.500H927.5M856.5 213.500H927.5M933.5 169.500H1003.5M933.5 213.500H1003.5M250.500 169.500L248.500 185V198L250.500 213.500M1003.500 169.500L1005.500 185V198L1003.500 213.500" fill="none" stroke="#008000" stroke-width="1" shape-rendering="crispEdges"/><rect x="247" y="263" width="68" height="1" fill="#800000"/><rect x="314" y="218" width="78" height="2" fill="#800000"/><rect x="314" y="218" width="1" height="46" fill="#800000"/><rect x="391" y="263" width="78" height="1" fill="#800000"/><rect x="391" y="218" width="1" height="46" fill="#800000"/><rect x="468" y="218" width="78" height="2" fill="#800000"/><rect x="468" y="218" width="1" height="46" fill="#800000"/><rect x="545" y="263" width="78" height="1" fill="#800000"/><rect x="545" y="218" width="1" height="46" fill="#800000"/><rect x="622" y="218" width="77" height="2" fill="#800000"/><rect x="622" y="218" width="1" height="46" fill="#800000"/><rect x="698" y="263" width="78" height="1" fill="#800000"/><rect x="698" y="218" width="1" height="46" fill="#800000"/><rect x="775" y="218" width="78" height="2" fill="#800000"/><rect x="775" y="218" width="1" height="46" fill="#800000"/><rect x="852" y="263" width="78" height="1" fill="#800000"/><rect x="852" y="218" width="1" height="46" fill="#800000"/><rect x="929" y="218" width="77.5" height="2" fill="#800000"/><rect x="929" y="218" width="1" height="46" fill="#800000"/><rect x="247" y="313" width="145" height="1" fill="#FF0000"/><rect x="391" y="268" width="155" height="2" fill="#FF0000"/><rect x="391" y="268" width="1" height="46" fill="#FF0000"/><rect x="545" y="313" width="154" height="1" fill="#FF0000"/><rect x="545" y="268" width="1" height="46" fill="#FF0000"/><rect x="698" y="268" width="155" height="2" fill="#FF0000"/><rect x="698" y="268" width="1" height="46" fill="#FF0000"/><rect x="852" y="313" width="154.5" height="1" fill="#FF0000"/><rect x="852" y="268" width="1" height="46" fill="#FF0000"/><rect x="247" y="363" width="299" height="1" fill="#FF8040"/><rect x="545" y="318" width="308" height="2" fill="#FF8040"/><rect x="545" y="318" width="1" height="46" fill="#FF8040"/><rect x="852" y="363" width="154.5" height="1" fill="#FF8040"/><rect x="852" y="318" width="1" height="46" fill="#FF8040"/><rect x="247" y="413" width="606" height="1" fill="#FFFF00"/><rect x="852" y="368" width="154.5" height="2" fill="#FFFF00"/><rect x="852" y="368" width="1" height="46" fill="#FFFF00"/><rect x="247" y="463" width="759" height="1" fill="#00FF80"/><rect x="247" y="513" width="759" height="1" fill="#0000FF"/><rect x="247" y="563" width="759" height="1" fill="#FF00FF"/><rect x="247" y="613" width="759" height="1" fill="#808080"/><rect x="247" y="663" width="759" height="1" fill="#800000"/><rect x="247" y="713" width="759" height="1" fill="#FF0000"/><rect x="622" y="150" width="1" height="582" fill="#FF0000"/><rect x="621" y="160" width="3" height="6" fill="#000"/></svg><div class="b" style="left:247px;top:138px;width:1px;height:594px;background:#0A7CFF"></div><div class="t" style="left:263.5px;top:148px;width:120px;text-align:center;font:12px/12px 'Liberation Serif';letter-spacing:-1px"><span style="display:inline-block;transform-origin:50% 84%;transform:scaleY(1.12);-webkit-text-stroke:0.2px #000">-008.19us</span></div><div class="t" style="left:338.5px;top:148px;width:120px;text-align:center;font:12px/12px 'Liberation Serif';letter-spacing:-1px"><span style="display:inline-block;transform-origin:50% 84%;transform:scaleY(1.12);-webkit-text-stroke:0.2px #000">-006.143us</span></div><div class="t" style="left:413.5px;top:148px;width:120px;text-align:center;font:12px/12px 'Liberation Serif';letter-spacing:-1px"><span style="display:inline-block;transform-origin:50% 84%;transform:scaleY(1.12);-webkit-text-stroke:0.2px #000">-004.095us</span></div><div class="t" style="left:488.5px;top:148px;width:120px;text-align:center;font:12px/12px 'Liberation Serif';letter-spacing:-1px"><span style="display:inline-block;transform-origin:50% 84%;transform:scaleY(1.12);-webkit-text-stroke:0.2px #000">-002.047us</span></div><div class="t" style="left:563.5px;top:148px;width:120px;text-align:center;font:12px/12px 'Liberation Serif';letter-spacing:-1px"><span style="display:inline-block;transform-origin:50% 84%;transform:scaleY(1.12);-webkit-text-stroke:0.2px #000">0ns</span></div><div class="t" style="left:638.5px;top:148px;width:120px;text-align:center;font:12px/12px 'Liberation Serif';letter-spacing:-1px"><span style="display:inline-block;transform-origin:50% 84%;transform:scaleY(1.12);-webkit-text-stroke:0.2px #000">2.047us</span></div><div class="t" style="left:713.5px;top:148px;width:120px;text-align:center;font:12px/12px 'Liberation Serif';letter-spacing:-1px"><span style="display:inline-block;transform-origin:50% 84%;transform:scaleY(1.12);-webkit-text-stroke:0.2px #000">4.095us</span></div><div class="t" style="left:788.5px;top:148px;width:120px;text-align:center;font:12px/12px 'Liberation Serif';letter-spacing:-1px"><span style="display:inline-block;transform-origin:50% 84%;transform:scaleY(1.12);-webkit-text-stroke:0.2px #000">6.142us</span></div><div class="t" style="left:863.5px;top:148px;width:120px;text-align:center;font:12px/12px 'Liberation Serif';letter-spacing:-1px"><span style="display:inline-block;transform-origin:50% 84%;transform:scaleY(1.12);-webkit-text-stroke:0.2px #000">8.19us</span></div><div class="t" style="left:938.5px;top:148px;width:120px;text-align:center;font:12px/12px 'Liberation Serif';letter-spacing:-1px"><span style="display:inline-block;transform-origin:50% 84%;transform:scaleY(1.12);-webkit-text-stroke:0.2px #000">10.2<span style="color:transparent">37us</span></span></div><div class="t" style="left:266.75px;top:184px;font:16px/16px 'Liberation Serif';color:#000;"><span style="display:inline-block;transform-origin:0 84%;transform:scale(1.0000,1.070);-webkit-text-stroke:0.2px #000;">0X00</span></div><div class="t" style="left:335.75px;top:184px;font:16px/16px 'Liberation Serif';color:#000;"><span style="display:inline-block;transform-origin:0 84%;transform:scale(1.0000,1.070);-webkit-text-stroke:0.2px #000;">0X01</span></div><div class="t" style="left:413px;top:184px;font:16px/16px 'Liberation Serif';color:#000;"><span style="display:inline-block;transform-origin:0 84%;transform:scale(1.0000,1.070);-webkit-text-stroke:0.2px #000;">0X02</span></div><div class="t" style="left:490px;top:184px;font:16px/16px 'Liberation Serif';color:#000;"><span style="display:inline-block;transform-origin:0 84%;transform:scale(1.0000,1.070);-webkit-text-stroke:0.2px #000;">0X03</span></div><div class="t" style="left:567px;top:184px;font:16px/16px 'Liberation Serif';color:#000;"><span style="display:inline-block;transform-origin:0 84%;transform:scale(1.0000,1.070);-webkit-text-stroke:0.2px #000;">0X04</span></div><div class="t" style="left:644px;top:184px;font:16px/16px 'Liberation Serif';color:#000;"><span style="display:inline-block;transform-origin:0 84%;transform:scale(1.0000,1.070);-webkit-text-stroke:0.2px #000;">0X05</span></div><div class="t" style="left:721px;top:184px;font:16px/16px 'Liberation Serif';color:#000;"><span style="display:inline-block;transform-origin:0 84%;transform:scale(1.0000,1.070);-webkit-text-stroke:0.2px #000;">0X06</span></div><div class="t" style="left:798px;top:184px;font:16px/16px 'Liberation Serif';color:#000;"><span style="display:inline-block;transform-origin:0 84%;transform:scale(1.0000,1.070);-webkit-text-stroke:0.2px #000;">0X07</span></div><div class="t" style="left:875px;top:184px;font:16px/16px 'Liberation Serif';color:#000;"><span style="display:inline-block;transform-origin:0 84%;transform:scale(1.0000,1.070);-webkit-text-stroke:0.2px #000;">0X08</span></div><div class="t" style="left:934.25px;top:184px;font:16px/16px 'Liberation Serif';color:#000;"><span style="display:inline-block;transform-origin:0 84%;transform:scale(1.0000,1.070);-webkit-text-stroke:0.2px #000;">0X09</span></div><div class="b" style="left:247px;top:138px;width:759px;height:594px;overflow:hidden"><div class="t" style="left:8.5px;top:103px;font:16px/16px 'Liberation Serif';color:#000;"><span style="display:inline-block;transform-origin:0 0;transform:scale(1.0000,1.070);-webkit-text-stroke:0.2px #000;">7.98us</span></div><div class="t" style="left:84.75px;top:103px;font:16px/16px 'Liberation Serif';color:#000;"><span style="display:inline-block;transform-origin:0 0;transform:scale(1.0000,1.070);-webkit-text-stroke:0.2px #000;">2.1us</span></div><div class="t" style="left:161.75px;top:103px;font:16px/16px 'Liberation Serif';color:#000;"><span style="display:inline-block;transform-origin:0 0;transform:scale(1.0000,1.070);-webkit-text-stroke:0.2px #000;">2.1us</span></div><div class="t" style="left:230px;top:103px;font:16px/16px 'Liberation Serif';color:#000;"><span style="display:inline-block;transform-origin:0 0;transform:scale(1.0000,1.070);-webkit-text-stroke:0.2px #000;">2.095us</span></div><div class="t" style="left:316px;top:103px;font:16px/16px 'Liberation Serif';color:#000;"><span style="display:inline-block;transform-origin:0 0;transform:scale(1.0000,1.070);-webkit-text-stroke:0.2px #000;">2.1us</span></div><div class="t" style="left:384.75px;top:103px;font:16px/16px 'Liberation Serif';color:#000;"><span style="display:inline-block;transform-origin:0 0;transform:scale(1.0000,1.070);-webkit-text-stroke:0.2px #000;">2.095us</span></div><div class="t" style="left:460.25px;top:103px;font:16px/16px 'Liberation Serif';color:#000;"><span style="display:inline-block;transform-origin:0 0;transform:scale(1.0000,1.070);-webkit-text-stroke:0.2px #000;">2.095us</span></div><div class="t" style="left:545.5px;top:103px;font:16px/16px 'Liberation Serif';color:#000;"><span style="display:inline-block;transform-origin:0 0;transform:scale(1.0000,1.070);-webkit-text-stroke:0.2px #000;">2.1us</span></div><div class="t" style="left:614.25px;top:103px;font:16px/16px 'Liberation Serif';color:#000;"><span style="display:inline-block;transform-origin:0 0;transform:scale(1.0000,1.070);-webkit-text-stroke:0.2px #000;">2.105us</span></div><div class="t" style="left:691.5px;top:103px;font:16px/16px 'Liberation Serif';color:#000;"><span style="display:inline-block;transform-origin:0 0;transform:scale(1.0000,1.070);-webkit-text-stroke:0.2px #000;">2.105us</span></div><div class="t" style="left:40.5px;top:153px;font:16px/16px 'Liberation Serif';color:#000;"><span style="display:inline-block;transform-origin:0 0;transform:scale(1.0000,1.070);-webkit-text-stroke:0.2px #000;">10.085us</span></div><div class="t" style="left:193px;top:153px;font:16px/16px 'Liberation Serif';color:#000;"><span style="display:inline-block;transform-origin:0 0;transform:scale(1.0000,1.070);-webkit-text-stroke:0.2px #000;">4.195us</span></div><div class="t" style="left:349.75px;top:153px;font:16px/16px 'Liberation Serif';color:#000;"><span style="display:inline-block;transform-origin:0 0;transform:scale(1.0000,1.070);-webkit-text-stroke:0.2px #000;">4.19us</span></div><div class="t" style="left:499px;top:153px;font:16px/16px 'Liberation Serif';color:#000;"><span style="display:inline-block;transform-origin:0 0;transform:scale(1.0000,1.070);-webkit-text-stroke:0.2px #000;">4.195us</span></div><div class="t" style="left:658px;top:153px;font:16px/16px 'Liberation Serif';color:#000;"><span style="display:inline-block;transform-origin:0 0;transform:scale(1.0000,1.070);-webkit-text-stroke:0.2px #000;">4.21us</span></div><div class="t" style="left:121.75px;top:203px;font:16px/16px 'Liberation Serif';color:#000;"><span style="display:inline-block;transform-origin:0 0;transform:scale(1.0000,1.070);-webkit-text-stroke:0.2px #000;">14.28us</span></div><div class="t" style="left:422.25px;top:203px;font:16px/16px 'Liberation Serif';color:#000;"><span style="display:inline-block;transform-origin:0 0;transform:scale(1.0000,1.070);-webkit-text-stroke:0.2px #000;">8.385us</span></div><div class="t" style="left:723.5px;top:203px;font:16px/16px 'Liberation Serif';color:#000;"><span style="display:inline-block;transform-origin:0 0;transform:scale(1.0000,1.070);-webkit-text-stroke:0.2px #000;">8.415us</span></div><div class="t" style="left:274px;top:253px;font:16px/16px 'Liberation Serif';color:#000;"><span style="display:inline-block;transform-origin:0 0;transform:scale(1.0000,1.070);-webkit-text-stroke:0.2px #000;">22.67us</span></div><div class="t" style="left:729px;top:253px;font:16px/16px 'Liberation Serif';color:#000;"><span style="display:inline-block;transform-origin:0 0;transform:scale(1.0000,1.070);-webkit-text-stroke:0.2px #000;">16.8us</span></div><div class="t" style="left:417.75px;top:303px;font:16px/16px 'Liberation Serif';color:#000;"><span style="display:inline-block;transform-origin:0 0;transform:scale(1.0000,1.070);-webkit-text-stroke:0.2px #000;">39.475us</span></div><div class="t" style="left:421.5px;top:353px;font:16px/16px 'Liberation Serif';color:#000;"><span style="display:inline-block;transform-origin:0 0;transform:scale(1.0000,1.070);-webkit-text-stroke:0.2px #000;">73.08us</span></div><div class="t" style="left:418.5px;top:403px;font:16px/16px 'Liberation Serif';color:#000;"><span style="display:inline-block;transform-origin:0 0;transform:scale(1.0000,1.070);-webkit-text-stroke:0.2px #000;">140.28us</span></div><div class="t" style="left:418.5px;top:453px;font:16px/16px 'Liberation Serif';color:#000;"><span style="display:inline-block;transform-origin:0 0;transform:scale(1.0000,1.070);-webkit-text-stroke:0.2px #000;">163.84us</span></div><div class="t" style="left:418.5px;top:503px;font:16px/16px 'Liberation Serif';color:#000;"><span style="display:inline-block;transform-origin:0 0;transform:scale(1.0000,1.070);-webkit-text-stroke:0.2px #000;">163.84us</span></div><div class="t" style="left:418.5px;top:553px;font:16px/16px 'Liberation Serif';color:#000;"><span style="display:inline-block;transform-origin:0 0;transform:scale(1.0000,1.070);-webkit-text-stroke:0.2px #000;">163.84us</span></div></div><div class="b" style="left:247px;top:158px;width:1px;height:8px;background:#000"></div><div class="b" style="left:247px;top:138px;width:10px;height:13px;background:#0A7CFF;border-right:1px solid #000;border-bottom:1px solid #000"></div><div class="t" style="left:248px;top:138px;font:bold 9px/10px 'Liberation Serif';color:#F09020;width:8px;overflow:hidden">3</div><div class="b" style="left:616px;top:138px;width:13px;height:13px;background:#FF0000;border-right:1px solid #000;border-bottom:1px solid #000"></div><div class="b" style="left:619px;top:138px;width:6px;height:1px;background:#20E8F0"></div><div class="b" style="left:621px;top:139px;width:1px;height:6px;background:#20E8F0"></div><div class="b" style="left:620px;top:145px;width:4px;height:1px;background:#20E8F0"></div><div class="b" style="left:1000px;top:138px;width:6px;height:2px;background:#FFFF00"></div><div class="b" style="left:1000px;top:140px;width:6px;height:3px;background:#20E0F0"></div><div class="b" style="left:1003px;top:142px;width:3px;height:2px;background:#F02020"></div><div class="b" style="left:997px;top:144px;width:9px;height:12px;background:#0A7CFF"></div><div class="t" style="left:999px;top:144px;font:12px/12px 'Liberation Serif';color:#F09020;width:7px;overflow:hidden">D</div>
<!-- scrollbars -->
<div class="b" style="left:2px;top:732px;width:117px;height:17px;background:linear-gradient(to bottom,#ECEAE2 0%,#F6F5F0 30%,#FDFDFB 100%)"></div><div class="b" style="left:2px;top:732px;width:16px;height:17px;background:linear-gradient(to bottom,#CAD8FE 0%,#C0D0FC 50%,#B4C6F8 100%);border:1px solid #fff;border-radius:2px;box-shadow:inset -1px -1px 0 #98B0E8, inset 1px 1px 0 #D8E2FF"></div><svg class="b" style="left:4px;top:735px" width="11" height="11"><path d="M6.500 1.500L2.500 5.500l4 4" stroke="#4D6185" stroke-width="2.200" fill="none"/></svg><div class="b" style="left:103px;top:732px;width:16px;height:17px;background:linear-gradient(to bottom,#CAD8FE 0%,#C0D0FC 50%,#B4C6F8 100%);border:1px solid #fff;border-radius:2px;box-shadow:inset -1px -1px 0 #98B0E8, inset 1px 1px 0 #D8E2FF"></div><svg class="b" style="left:105px;top:735px" width="11" height="11"><path d="M3 1.500l4 4-4 4" stroke="#4D6185" stroke-width="2.200" fill="none"/></svg><div class="b" style="left:18px;top:732px;width:84px;height:17px;background:linear-gradient(to bottom,#CAD8FE 0%,#C0D0FC 50%,#B4C6F8 100%);border:1px solid #fff;border-radius:2px;box-shadow:inset -1px -1px 0 #98B0E8, inset 1px 1px 0 #D8E2FF"></div><div class="b" style="left:56px;top:737px;width:8px;height:7px;background:repeating-linear-gradient(to right,#EEF4FE 0 1px,#8CA4E0 1px 2px)"></div><div class="b" style="left:124px;top:732px;width:58px;height:17px;background:linear-gradient(to bottom,#ECEAE2 0%,#F6F5F0 30%,#FDFDFB 100%)"></div><div class="b" style="left:124px;top:732px;width:16px;height:17px;background:linear-gradient(to bottom,#CAD8FE 0%,#C0D0FC 50%,#B4C6F8 100%);border:1px solid #fff;border-radius:2px;box-shadow:inset -1px -1px 0 #98B0E8, inset 1px 1px 0 #D8E2FF"></div><svg class="b" style="left:126px;top:735px" width="11" height="11"><path d="M6.500 1.500L2.500 5.500l4 4" stroke="#4D6185" stroke-width="2.200" fill="none"/></svg><div class="b" style="left:166px;top:732px;width:16px;height:17px;background:linear-gradient(to bottom,#CAD8FE 0%,#C0D0FC 50%,#B4C6F8 100%);border:1px solid #fff;border-radius:2px;box-shadow:inset -1px -1px 0 #98B0E8, inset 1px 1px 0 #D8E2FF"></div><svg class="b" style="left:168px;top:735px" width="11" height="11"><path d="M3 1.500l4 4-4 4" stroke="#4D6185" stroke-width="2.200" fill="none"/></svg><div class="b" style="left:141px;top:732px;width:17px;height:17px;background:linear-gradient(to bottom,#CAD8FE 0%,#C0D0FC 50%,#B4C6F8 100%);border:1px solid #fff;border-radius:2px;box-shadow:inset -1px -1px 0 #98B0E8, inset 1px 1px 0 #D8E2FF"></div><div class="b" style="left:145.5px;top:737px;width:8px;height:7px;background:repeating-linear-gradient(to right,#EEF4FE 0 1px,#8CA4E0 1px 2px)"></div><div class="b" style="left:187px;top:732px;width:55px;height:17px;background:linear-gradient(to bottom,#ECEAE2 0%,#F6F5F0 30%,#FDFDFB 100%)"></div><div class="b" style="left:187px;top:732px;width:16px;height:17px;background:linear-gradient(to bottom,#CAD8FE 0%,#C0D0FC 50%,#B4C6F8 100%);border:1px solid #fff;border-radius:2px;box-shadow:inset -1px -1px 0 #98B0E8, inset 1px 1px 0 #D8E2FF"></div><svg class="b" style="left:189px;top:735px" width="11" height="11"><path d="M6.500 1.500L2.500 5.500l4 4" stroke="#4D6185" stroke-width="2.200" fill="none"/></svg><div class="b" style="left:226px;top:732px;width:16px;height:17px;background:linear-gradient(to bottom,#CAD8FE 0%,#C0D0FC 50%,#B4C6F8 100%);border:1px solid #fff;border-radius:2px;box-shadow:inset -1px -1px 0 #98B0E8, inset 1px 1px 0 #D8E2FF"></div><svg class="b" style="left:228px;top:735px" width="11" height="11"><path d="M3 1.500l4 4-4 4" stroke="#4D6185" stroke-width="2.200" fill="none"/></svg><div class="b" style="left:204px;top:732px;width:17px;height:17px;background:linear-gradient(to bottom,#CAD8FE 0%,#C0D0FC 50%,#B4C6F8 100%);border:1px solid #fff;border-radius:2px;box-shadow:inset -1px -1px 0 #98B0E8, inset 1px 1px 0 #D8E2FF"></div><div class="b" style="left:208.5px;top:737px;width:8px;height:7px;background:repeating-linear-gradient(to right,#EEF4FE 0 1px,#8CA4E0 1px 2px)"></div><div class="b" style="left:248px;top:732px;width:758px;height:17px;background:linear-gradient(to bottom,#ECEAE2 0%,#F6F5F0 30%,#FDFDFB 100%)"></div><div class="b" style="left:248px;top:732px;width:16px;height:17px;background:linear-gradient(to bottom,#CAD8FE 0%,#C0D0FC 50%,#B4C6F8 100%);border:1px solid #fff;border-radius:2px;box-shadow:inset -1px -1px 0 #98B0E8, inset 1px 1px 0 #D8E2FF"></div><svg class="b" style="left:250px;top:735px" width="11" height="11"><path d="M6.500 1.500L2.500 5.500l4 4" stroke="#4D6185" stroke-width="2.200" fill="none"/></svg><div class="b" style="left:990px;top:732px;width:16px;height:17px;background:linear-gradient(to bottom,#CAD8FE 0%,#C0D0FC 50%,#B4C6F8 100%);border:1px solid #fff;border-radius:2px;box-shadow:inset -1px -1px 0 #98B0E8, inset 1px 1px 0 #D8E2FF"></div><svg class="b" style="left:992px;top:735px" width="11" height="11"><path d="M3 1.500l4 4-4 4" stroke="#4D6185" stroke-width="2.200" fill="none"/></svg><div class="b" style="left:335px;top:732px;width:8px;height:17px;background:linear-gradient(to bottom,#CAD8FE 0%,#C0D0FC 50%,#B4C6F8 100%);border:1px solid #fff;border-radius:2px;box-shadow:inset -1px -1px 0 #98B0E8, inset 1px 1px 0 #D8E2FF"></div><div class="b" style="left:0px;top:749px;width:120px;height:1px;background:#ACA899"></div><div class="b" style="left:123px;top:749px;width:59px;height:1px;background:#ACA899"></div><div class="b" style="left:186px;top:749px;width:57px;height:1px;background:#ACA899"></div><div class="b" style="left:247px;top:749px;width:777px;height:1px;background:#ACA899"></div><div class="b" style="left:1006px;top:138px;width:17px;height:594px;background:linear-gradient(to right,#ECEAE2 0%,#F6F5F0 30%,#FDFDFB 100%)"></div><div class="b" style="left:1007px;top:138px;width:16px;height:17px;background:linear-gradient(to right,#CAD8FE 0%,#C0D0FC 50%,#B4C6F8 100%);border:1px solid #fff;border-radius:2px;box-shadow:inset -1px -1px 0 #98B0E8, inset 1px 1px 0 #D8E2FF"></div><svg class="b" style="left:1009px;top:141px" width="11" height="11"><path d="M1.500 7l4-4 4 4" stroke="#4D6185" stroke-width="2.200" fill="none"/></svg><div class="b" style="left:1007px;top:714px;width:16px;height:17px;background:linear-gradient(to right,#CAD8FE 0%,#C0D0FC 50%,#B4C6F8 100%);border:1px solid #fff;border-radius:2px;box-shadow:inset -1px -1px 0 #98B0E8, inset 1px 1px 0 #D8E2FF"></div><svg class="b" style="left:1009px;top:717px" width="11" height="11"><path d="M1.500 3.500l4 4 4-4" stroke="#4D6185" stroke-width="2.200" fill="none"/></svg><div class="b" style="left:1007px;top:156px;width:16px;height:186px;background:linear-gradient(to right,#CAD8FE 0%,#C0D0FC 50%,#B4C6F8 100%);border:1px solid #fff;border-radius:2px;box-shadow:inset -1px -1px 0 #98B0E8, inset 1px 1px 0 #D8E2FF"></div><div class="b" style="left:1011px;top:245px;width:7px;height:8px;background:repeating-linear-gradient(to bottom,#EEF4FE 0 1px,#8CA4E0 1px 2px)"></div><div class="b" style="left:1007px;top:733px;width:16px;height:16px;background:linear-gradient(to bottom,#1860D8 0,#1860D8 3px,#30A0F0 3px,#30A0F0 5px,#1058D0 5px,#1058D0 8px,#2C90E8 8px,#2C90E8 10px,#1058D0 10px,#1058D0 13px,#2880E0 13px)"></div>
<!-- status -->
<div class="b" style="left:0px;top:749px;width:1024px;height:16px;background:#ECE9D8;border-top:1px solid #C8C5B4"></div><div class="t" style="left:2px;top:752px;font:12px/12px 'Liberation Serif';color:#000;"><span class="c cj" style="width:24px">就緒</span></div><div class="b" style="left:479px;top:752px;width:388px;height:14px;border-left:1px solid #A5A18F;border-top:1px solid #A5A18F;border-right:1px solid #fff"></div><div class="b" style="left:870px;top:752px;width:65px;height:14px;border-left:1px solid #A5A18F;border-top:1px solid #A5A18F;border-right:1px solid #fff"></div><div class="b" style="left:938px;top:752px;width:83px;height:14px;border-left:1px solid #A5A18F;border-top:1px solid #A5A18F;border-right:1px solid #fff"></div><div class="t" style="left:872px;top:753px;font:12px/12px 'Liberation Serif';color:#000;"><span class="c cj" style="width:24px">停止</span>!</div><div class="t" style="left:940px;top:753px;font:12px/12px 'Liberation Serif';color:#000;"><span class="c cj" style="width:48px">一般模式</span></div><div class="b" style="left:0px;top:766px;width:1024px;height:2px;background:linear-gradient(to bottom,#3080E8,#1058D8)"></div>
<!-- annot -->
<div class="b" style="left:828px;top:32px;width:161px;height:54px;border:5px solid #F20D0D;border-radius:2px"></div><div class="b" style="left:557px;top:118px;width:129px;height:616px;border:5px solid #F20D0D;border-radius:2px"></div>
</div>
</body></html>
